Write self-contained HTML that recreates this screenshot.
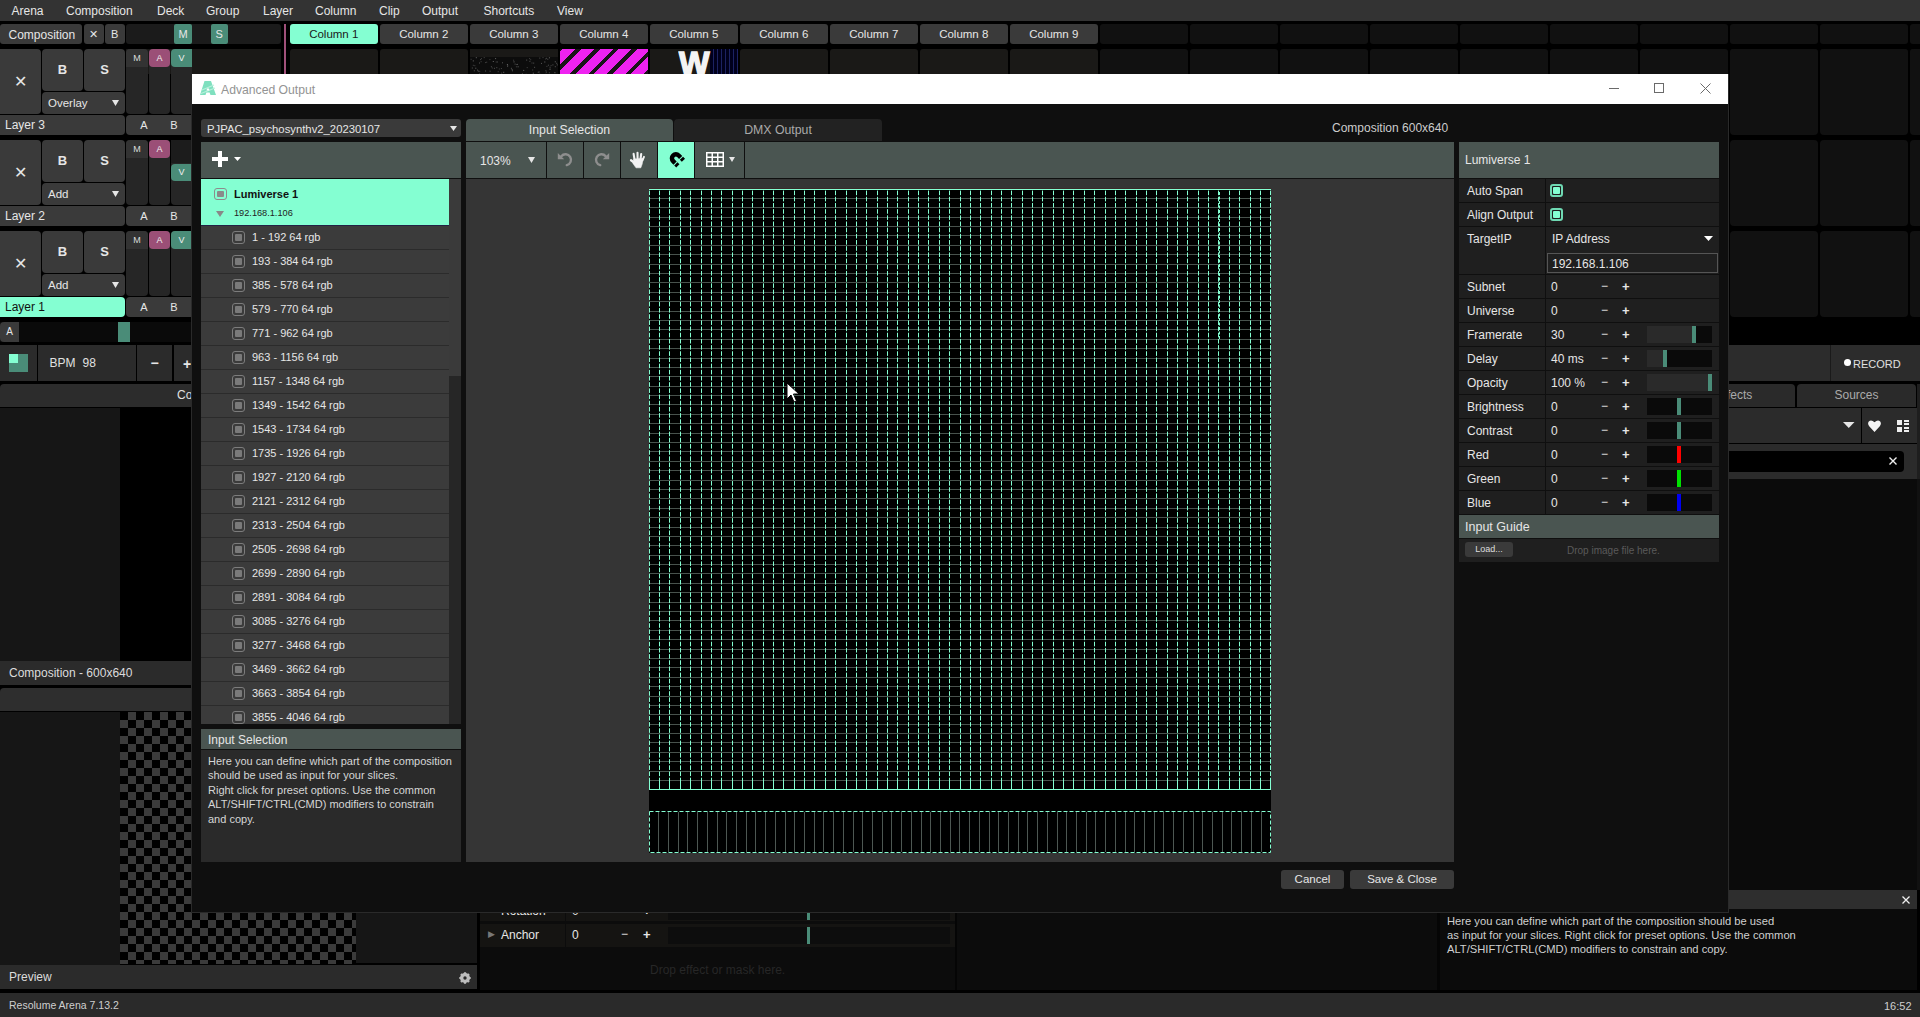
<!DOCTYPE html>
<html><head><meta charset="utf-8"><style>
html,body{margin:0;padding:0;width:1920px;height:1017px;overflow:hidden;background:#000;}
body{position:relative;font-family:"Liberation Sans",sans-serif;}
.a{position:absolute;box-sizing:border-box;}
.t{position:absolute;white-space:nowrap;line-height:1.15;}
.c{text-align:center;white-space:nowrap;}
</style></head><body>
<div class="a" style="left:0px;top:0px;width:1920px;height:1017px;background:#000;"></div>
<div class="a" style="left:0px;top:0px;width:1920px;height:21px;background:#333333;"></div>
<div class="t" style="left:11.5px;top:4.7px;font-size:12px;color:#e6e6e6;">Arena</div>
<div class="t" style="left:66px;top:4.7px;font-size:12px;color:#e6e6e6;">Composition</div>
<div class="t" style="left:157px;top:4.7px;font-size:12px;color:#e6e6e6;">Deck</div>
<div class="t" style="left:206px;top:4.7px;font-size:12px;color:#e6e6e6;">Group</div>
<div class="t" style="left:263px;top:4.7px;font-size:12px;color:#e6e6e6;">Layer</div>
<div class="t" style="left:315px;top:4.7px;font-size:12px;color:#e6e6e6;">Column</div>
<div class="t" style="left:379px;top:4.7px;font-size:12px;color:#e6e6e6;">Clip</div>
<div class="t" style="left:422px;top:4.7px;font-size:12px;color:#e6e6e6;">Output</div>
<div class="t" style="left:483.5px;top:4.7px;font-size:12px;color:#e6e6e6;">Shortcuts</div>
<div class="t" style="left:557px;top:4.7px;font-size:12px;color:#e6e6e6;">View</div>
<div class="a" style="left:0px;top:24px;width:82px;height:20px;background:#3a3a3a;border-radius:3px;"></div>
<div class="t" style="left:8.5px;top:28.7px;font-size:12px;color:#e6e6e6;">Composition</div>
<div class="a" style="left:84px;top:24px;width:19.5px;height:20px;background:#3a3a3a;border-radius:3px;"></div>
<div class="a c" style="left:84px;top:24px;width:19.5px;height:20px;line-height:20px;font-size:11px;color:#e6e6e6;">&#x2715;</div>
<div class="a" style="left:105px;top:24px;width:19.5px;height:20px;background:#3a3a3a;border-radius:3px;"></div>
<div class="a c" style="left:105px;top:24px;width:19.5px;height:20px;line-height:20px;font-size:11px;color:#e6e6e6;">B</div>
<div class="a" style="left:126px;top:24px;width:155px;height:20px;background:#1b1b1b;border-radius:3px;"></div>
<div class="a" style="left:174px;top:24px;width:18px;height:20px;background:#4a8c78;border-radius:2px;"></div>
<div class="a c" style="left:174px;top:24px;width:18px;height:20px;line-height:20px;font-size:11px;color:#e6e6e6;">M</div>
<div class="a" style="left:210.5px;top:24px;width:17.5px;height:20px;background:#4a8c78;border-radius:2px;"></div>
<div class="a c" style="left:210.5px;top:24px;width:17.5px;height:20px;line-height:20px;font-size:11px;color:#e6e6e6;">S</div>
<div class="a" style="left:284px;top:24px;width:2px;height:50px;background:#a0507a;"></div>
<div class="a" style="left:290px;top:24px;width:87.5px;height:20px;background:#84ffd2;border-radius:3px;"></div>
<div class="a c" style="left:290px;top:24px;width:87.5px;height:20px;line-height:20px;font-size:11.5px;color:#1a1a1a;">Column 1</div>
<div class="a" style="left:290px;top:49px;width:87.5px;height:25px;background:#1a1917;border-radius:3px 3px 0 0;"></div>
<div class="a" style="left:380px;top:24px;width:87.5px;height:20px;background:#3a3a3a;border-radius:3px;"></div>
<div class="a c" style="left:380px;top:24px;width:87.5px;height:20px;line-height:20px;font-size:11.5px;color:#e6e6e6;">Column 2</div>
<div class="a" style="left:380px;top:49px;width:87.5px;height:25px;background:#1a1917;border-radius:3px 3px 0 0;"></div>
<div class="a" style="left:470px;top:24px;width:87.5px;height:20px;background:#3a3a3a;border-radius:3px;"></div>
<div class="a c" style="left:470px;top:24px;width:87.5px;height:20px;line-height:20px;font-size:11.5px;color:#e6e6e6;">Column 3</div>
<div class="a" style="left:470px;top:49px;width:87.5px;height:25px;background:#1a1917;border-radius:3px 3px 0 0;"></div>
<div class="a" style="left:560px;top:24px;width:87.5px;height:20px;background:#3a3a3a;border-radius:3px;"></div>
<div class="a c" style="left:560px;top:24px;width:87.5px;height:20px;line-height:20px;font-size:11.5px;color:#e6e6e6;">Column 4</div>
<div class="a" style="left:560px;top:49px;width:87.5px;height:25px;background:#1a1917;border-radius:3px 3px 0 0;"></div>
<div class="a" style="left:650px;top:24px;width:87.5px;height:20px;background:#3a3a3a;border-radius:3px;"></div>
<div class="a c" style="left:650px;top:24px;width:87.5px;height:20px;line-height:20px;font-size:11.5px;color:#e6e6e6;">Column 5</div>
<div class="a" style="left:650px;top:49px;width:87.5px;height:25px;background:#1a1917;border-radius:3px 3px 0 0;"></div>
<div class="a" style="left:740px;top:24px;width:87.5px;height:20px;background:#3a3a3a;border-radius:3px;"></div>
<div class="a c" style="left:740px;top:24px;width:87.5px;height:20px;line-height:20px;font-size:11.5px;color:#e6e6e6;">Column 6</div>
<div class="a" style="left:740px;top:49px;width:87.5px;height:25px;background:#1a1917;border-radius:3px 3px 0 0;"></div>
<div class="a" style="left:830px;top:24px;width:87.5px;height:20px;background:#3a3a3a;border-radius:3px;"></div>
<div class="a c" style="left:830px;top:24px;width:87.5px;height:20px;line-height:20px;font-size:11.5px;color:#e6e6e6;">Column 7</div>
<div class="a" style="left:830px;top:49px;width:87.5px;height:25px;background:#1a1917;border-radius:3px 3px 0 0;"></div>
<div class="a" style="left:920px;top:24px;width:87.5px;height:20px;background:#3a3a3a;border-radius:3px;"></div>
<div class="a c" style="left:920px;top:24px;width:87.5px;height:20px;line-height:20px;font-size:11.5px;color:#e6e6e6;">Column 8</div>
<div class="a" style="left:920px;top:49px;width:87.5px;height:25px;background:#1a1917;border-radius:3px 3px 0 0;"></div>
<div class="a" style="left:1010px;top:24px;width:87.5px;height:20px;background:#3a3a3a;border-radius:3px;"></div>
<div class="a c" style="left:1010px;top:24px;width:87.5px;height:20px;line-height:20px;font-size:11.5px;color:#e6e6e6;">Column 9</div>
<div class="a" style="left:1010px;top:49px;width:87.5px;height:25px;background:#1a1917;border-radius:3px 3px 0 0;"></div>
<div class="a" style="left:1100px;top:24px;width:87.5px;height:20px;background:#111111;border-radius:3px;"></div>
<div class="a" style="left:1100px;top:49px;width:87.5px;height:25px;background:#111111;border-radius:3px 3px 0 0;"></div>
<div class="a" style="left:1190px;top:24px;width:87.5px;height:20px;background:#111111;border-radius:3px;"></div>
<div class="a" style="left:1190px;top:49px;width:87.5px;height:25px;background:#111111;border-radius:3px 3px 0 0;"></div>
<div class="a" style="left:1280px;top:24px;width:87.5px;height:20px;background:#111111;border-radius:3px;"></div>
<div class="a" style="left:1280px;top:49px;width:87.5px;height:25px;background:#111111;border-radius:3px 3px 0 0;"></div>
<div class="a" style="left:1370px;top:24px;width:87.5px;height:20px;background:#111111;border-radius:3px;"></div>
<div class="a" style="left:1370px;top:49px;width:87.5px;height:25px;background:#111111;border-radius:3px 3px 0 0;"></div>
<div class="a" style="left:1460px;top:24px;width:87.5px;height:20px;background:#111111;border-radius:3px;"></div>
<div class="a" style="left:1460px;top:49px;width:87.5px;height:25px;background:#111111;border-radius:3px 3px 0 0;"></div>
<div class="a" style="left:1550px;top:24px;width:87.5px;height:20px;background:#111111;border-radius:3px;"></div>
<div class="a" style="left:1550px;top:49px;width:87.5px;height:25px;background:#111111;border-radius:3px 3px 0 0;"></div>
<div class="a" style="left:1640px;top:24px;width:87.5px;height:20px;background:#111111;border-radius:3px;"></div>
<div class="a" style="left:1640px;top:49px;width:87.5px;height:25px;background:#111111;border-radius:3px 3px 0 0;"></div>
<div class="a" style="left:1730px;top:24px;width:87.5px;height:20px;background:#111111;border-radius:3px;"></div>
<div class="a" style="left:1730px;top:49px;width:87.5px;height:25px;background:#111111;border-radius:3px 3px 0 0;"></div>
<div class="a" style="left:1820px;top:24px;width:87.5px;height:20px;background:#111111;border-radius:3px;"></div>
<div class="a" style="left:1820px;top:49px;width:87.5px;height:25px;background:#111111;border-radius:3px 3px 0 0;"></div>
<div class="a" style="left:1910px;top:24px;width:87.5px;height:20px;background:#111111;border-radius:3px;"></div>
<div class="a" style="left:1910px;top:49px;width:87.5px;height:25px;background:#111111;border-radius:3px 3px 0 0;"></div>
<div class="a" style="left:126px;top:49px;width:155px;height:25px;background:#1a1917;"></div>
<svg class="a" style="left:470px;top:49px" width="88" height="25"><rect width="88" height="25" fill="#1a1917"/><rect y="8" width="88" height="17" fill="#0c0c0c"/><rect x="20.9" y="17.3" width="1" height="1" fill="#555"/><rect x="80.6" y="16.1" width="1" height="1" fill="#444"/><rect x="5.8" y="8.2" width="1" height="1" fill="#666"/><rect x="22.8" y="12.0" width="1" height="1" fill="#666"/><rect x="47.6" y="17.3" width="1" height="1" fill="#666"/><rect x="56.2" y="10.6" width="1" height="1" fill="#555"/><rect x="76.4" y="16.9" width="1" height="1" fill="#444"/><rect x="59.1" y="9.1" width="1" height="1" fill="#444"/><rect x="3.8" y="21.3" width="1" height="1" fill="#555"/><rect x="41.6" y="20.2" width="1" height="1" fill="#666"/><rect x="62.8" y="23.7" width="1" height="1" fill="#666"/><rect x="64.1" y="17.8" width="1" height="1" fill="#555"/><rect x="77.3" y="9.7" width="1" height="1" fill="#555"/><rect x="43.5" y="12.4" width="1" height="1" fill="#666"/><rect x="68.5" y="22.5" width="1" height="1" fill="#666"/><rect x="44.6" y="14.6" width="1" height="1" fill="#555"/><rect x="47.0" y="14.9" width="1" height="1" fill="#555"/><rect x="79.6" y="19.6" width="1" height="1" fill="#444"/><rect x="75.4" y="24.8" width="1" height="1" fill="#555"/><rect x="61.5" y="13.5" width="1" height="1" fill="#444"/><rect x="79.6" y="17.7" width="1" height="1" fill="#555"/><rect x="55.7" y="24.8" width="1" height="1" fill="#555"/><rect x="25.1" y="9.1" width="1" height="1" fill="#666"/><rect x="7.8" y="21.6" width="1" height="1" fill="#666"/><rect x="78.9" y="8.3" width="1" height="1" fill="#666"/><rect x="67.7" y="22.8" width="1" height="1" fill="#444"/><rect x="53.2" y="20.9" width="1" height="1" fill="#666"/><rect x="63.2" y="13.6" width="1" height="1" fill="#555"/><rect x="44.5" y="25.0" width="1" height="1" fill="#555"/><rect x="0.6" y="9.8" width="1" height="1" fill="#444"/><rect x="2.8" y="11.4" width="1" height="1" fill="#666"/><rect x="25.7" y="12.5" width="1" height="1" fill="#444"/><rect x="86.2" y="13.8" width="1" height="1" fill="#555"/><rect x="84.4" y="23.2" width="1" height="1" fill="#666"/><rect x="33.2" y="22.8" width="1" height="1" fill="#666"/><rect x="56.7" y="18.1" width="1" height="1" fill="#444"/><rect x="9.0" y="24.5" width="1" height="1" fill="#444"/><rect x="23.9" y="18.8" width="1" height="1" fill="#555"/><rect x="82.4" y="15.4" width="1" height="1" fill="#555"/><rect x="45.9" y="17.3" width="1" height="1" fill="#444"/><rect x="69.4" y="24.8" width="1" height="1" fill="#555"/><rect x="1.8" y="18.5" width="1" height="1" fill="#555"/><rect x="5.3" y="18.7" width="1" height="1" fill="#666"/><rect x="31.1" y="23.6" width="1" height="1" fill="#444"/><rect x="62.2" y="20.5" width="1" height="1" fill="#444"/><rect x="51.9" y="24.2" width="1" height="1" fill="#444"/><rect x="84.8" y="12.3" width="1" height="1" fill="#666"/><rect x="26.3" y="18.2" width="1" height="1" fill="#555"/><rect x="32.0" y="13.3" width="1" height="1" fill="#555"/><rect x="74.3" y="12.5" width="1" height="1" fill="#666"/><rect x="9.2" y="21.8" width="1" height="1" fill="#444"/><rect x="60.2" y="10.2" width="1" height="1" fill="#444"/><rect x="19.6" y="21.7" width="1" height="1" fill="#555"/><rect x="28.8" y="19.5" width="1" height="1" fill="#444"/><rect x="9.0" y="13.5" width="1" height="1" fill="#555"/><rect x="59.4" y="11.8" width="1" height="1" fill="#555"/><rect x="7.0" y="20.6" width="1" height="1" fill="#555"/><rect x="77.9" y="15.7" width="1" height="1" fill="#555"/><rect x="69.3" y="8.6" width="1" height="1" fill="#555"/><rect x="27.7" y="22.2" width="1" height="1" fill="#444"/><rect x="16.2" y="12.7" width="1" height="1" fill="#444"/><rect x="71.0" y="13.9" width="1" height="1" fill="#555"/><rect x="37.1" y="16.8" width="1" height="1" fill="#555"/><rect x="40.9" y="18.8" width="1" height="1" fill="#555"/><rect x="36.9" y="15.0" width="1" height="1" fill="#666"/><rect x="13.7" y="8.1" width="1" height="1" fill="#444"/><rect x="86.8" y="15.4" width="1" height="1" fill="#555"/><rect x="2.8" y="15.8" width="1" height="1" fill="#444"/><rect x="84.8" y="17.2" width="1" height="1" fill="#555"/><rect x="75.8" y="22.6" width="1" height="1" fill="#555"/><rect x="10.6" y="12.2" width="1" height="1" fill="#444"/><rect x="79.5" y="19.8" width="1" height="1" fill="#555"/><rect x="78.9" y="23.3" width="1" height="1" fill="#444"/><rect x="4.3" y="16.2" width="1" height="1" fill="#444"/><rect x="15.1" y="13.1" width="1" height="1" fill="#444"/><rect x="46.2" y="15.0" width="1" height="1" fill="#444"/><rect x="10.0" y="10.1" width="1" height="1" fill="#444"/><rect x="42.0" y="21.3" width="1" height="1" fill="#555"/><rect x="19.4" y="10.1" width="1" height="1" fill="#444"/><rect x="15.1" y="21.5" width="1" height="1" fill="#555"/><rect x="72.5" y="8.1" width="1" height="1" fill="#444"/><rect x="75.9" y="8.8" width="1" height="1" fill="#555"/><rect x="21.8" y="18.5" width="1" height="1" fill="#444"/><rect x="37.2" y="16.0" width="1" height="1" fill="#444"/><rect x="75.4" y="21.2" width="1" height="1" fill="#444"/><rect x="11.0" y="9.2" width="1" height="1" fill="#444"/><rect x="75.2" y="9.5" width="1" height="1" fill="#444"/><rect x="43.1" y="10.7" width="1" height="1" fill="#444"/><rect x="30.9" y="19.0" width="1" height="1" fill="#444"/><rect x="26.8" y="12.5" width="1" height="1" fill="#555"/></svg>
<div class="a" style="left:560px;top:49px;width:88px;height:25px;background:repeating-linear-gradient(135deg,#1a1418 0 2.1px,#ee22f0 2.1px 11.3px,#1a1418 11.3px 13.1px);"></div>
<div class="a" style="left:650px;top:49px;width:88px;height:25px;background:#1a1917;"></div>
<div class="a" style="left:710px;top:49px;width:28px;height:25px;background:repeating-linear-gradient(90deg,#00001c 0 3px,#1c2262 3px 4px);"></div>
<div class="a" style="left:678px;top:46px;width:36px;height:28px;overflow:hidden;"><div style="position:absolute;left:0;top:0;font:bold 34px/1 'Liberation Sans',sans-serif;color:#f4f4f4;-webkit-text-stroke:1.5px #f4f4f4;transform:scaleX(0.95);transform-origin:0 0;left:1px;">W</div></div>
<div class="a" style="left:1730px;top:49px;width:87.5px;height:86px;background:#111111;border-radius:4px;"></div>
<div class="a" style="left:1820px;top:49px;width:87.5px;height:86px;background:#111111;border-radius:4px;"></div>
<div class="a" style="left:1910px;top:49px;width:87.5px;height:86px;background:#111111;border-radius:4px;"></div>
<div class="a" style="left:1730px;top:140px;width:87.5px;height:86px;background:#111111;border-radius:4px;"></div>
<div class="a" style="left:1820px;top:140px;width:87.5px;height:86px;background:#111111;border-radius:4px;"></div>
<div class="a" style="left:1910px;top:140px;width:87.5px;height:86px;background:#111111;border-radius:4px;"></div>
<div class="a" style="left:1730px;top:231px;width:87.5px;height:86px;background:#111111;border-radius:4px;"></div>
<div class="a" style="left:1820px;top:231px;width:87.5px;height:86px;background:#111111;border-radius:4px;"></div>
<div class="a" style="left:1910px;top:231px;width:87.5px;height:86px;background:#111111;border-radius:4px;"></div>
<div class="a" style="left:0px;top:49px;width:41px;height:65px;background:#3a3a3a;border-radius:0 4px 4px 0;"></div>
<div class="a c" style="left:0px;top:49px;width:41px;height:65px;line-height:65px;font-size:16px;color:#e6e6e6;">&#x2715;</div>
<div class="a" style="left:42px;top:49px;width:41px;height:42px;background:#3a3a3a;border-radius:4px;"></div>
<div class="a c" style="left:42px;top:49px;width:41px;height:42px;line-height:42px;font-size:13px;color:#e6e6e6;font-weight:bold;">B</div>
<div class="a" style="left:84px;top:49px;width:41px;height:42px;background:#3a3a3a;border-radius:4px;"></div>
<div class="a c" style="left:84px;top:49px;width:41px;height:42px;line-height:42px;font-size:13px;color:#e6e6e6;font-weight:bold;">S</div>
<div class="a" style="left:42px;top:92px;width:83px;height:22px;background:#3a3a3a;border-radius:4px;"></div>
<div class="t" style="left:48px;top:96.7px;font-size:11.5px;color:#e6e6e6;">Overlay</div>
<svg class="a" style="left:112px;top:100px" width="7" height="6"><path d="M0 0 L7 0 L3.5 6 Z" fill="#e6e6e6"/></svg>
<div class="a" style="left:126px;top:49px;width:22px;height:65px;background:#262626;border-radius:4px;"></div>
<div class="a" style="left:126px;top:49px;width:22px;height:18px;background:#333333;border-radius:4px 4px 0 0;"></div>
<div class="a c" style="left:126px;top:49px;width:22px;height:18px;line-height:18px;font-size:9px;color:#dcdcdc;">M</div>
<div class="a" style="left:149px;top:49px;width:21px;height:65px;background:#262626;border-radius:4px;"></div>
<div class="a" style="left:149px;top:49px;width:21px;height:18px;background:#9b4f77;border-radius:4px;"></div>
<div class="a c" style="left:149px;top:49px;width:21px;height:18px;line-height:18px;font-size:9px;color:#f0f0f0;">A</div>
<div class="a" style="left:171px;top:49px;width:21px;height:65px;background:#262626;border-radius:4px 0 0 4px;"></div>
<div class="a" style="left:171px;top:49px;width:21px;height:18px;background:#4a8c78;border-radius:4px 0 0 4px;"></div>
<div class="a c" style="left:171px;top:49px;width:21px;height:18px;line-height:18px;font-size:9px;color:#f0f0f0;">V</div>
<div class="a" style="left:0px;top:115px;width:125px;height:20px;background:#3a3a3a;border-radius:0 4px 4px 0;"></div>
<div class="t" style="left:5px;top:118.7px;font-size:12px;color:#e6e6e6;">Layer 3</div>
<div class="a" style="left:126px;top:115px;width:66px;height:20px;background:#3a3a3a;border-radius:4px 0 0 4px;"></div>
<div class="a c" style="left:134px;top:115px;width:20px;height:20px;line-height:20px;font-size:11px;color:#e6e6e6;">A</div>
<div class="a c" style="left:164px;top:115px;width:20px;height:20px;line-height:20px;font-size:11px;color:#e6e6e6;">B</div>
<div class="a" style="left:0px;top:140px;width:41px;height:65px;background:#3a3a3a;border-radius:0 4px 4px 0;"></div>
<div class="a c" style="left:0px;top:140px;width:41px;height:65px;line-height:65px;font-size:16px;color:#e6e6e6;">&#x2715;</div>
<div class="a" style="left:42px;top:140px;width:41px;height:42px;background:#3a3a3a;border-radius:4px;"></div>
<div class="a c" style="left:42px;top:140px;width:41px;height:42px;line-height:42px;font-size:13px;color:#e6e6e6;font-weight:bold;">B</div>
<div class="a" style="left:84px;top:140px;width:41px;height:42px;background:#3a3a3a;border-radius:4px;"></div>
<div class="a c" style="left:84px;top:140px;width:41px;height:42px;line-height:42px;font-size:13px;color:#e6e6e6;font-weight:bold;">S</div>
<div class="a" style="left:42px;top:183px;width:83px;height:22px;background:#3a3a3a;border-radius:4px;"></div>
<div class="t" style="left:48px;top:187.7px;font-size:11.5px;color:#e6e6e6;">Add</div>
<svg class="a" style="left:112px;top:191px" width="7" height="6"><path d="M0 0 L7 0 L3.5 6 Z" fill="#e6e6e6"/></svg>
<div class="a" style="left:126px;top:140px;width:22px;height:65px;background:#262626;border-radius:4px;"></div>
<div class="a" style="left:126px;top:140px;width:22px;height:18px;background:#333333;border-radius:4px 4px 0 0;"></div>
<div class="a c" style="left:126px;top:140px;width:22px;height:18px;line-height:18px;font-size:9px;color:#dcdcdc;">M</div>
<div class="a" style="left:149px;top:140px;width:21px;height:65px;background:#262626;border-radius:4px;"></div>
<div class="a" style="left:149px;top:140px;width:21px;height:18px;background:#9b4f77;border-radius:4px;"></div>
<div class="a c" style="left:149px;top:140px;width:21px;height:18px;line-height:18px;font-size:9px;color:#f0f0f0;">A</div>
<div class="a" style="left:171px;top:140px;width:21px;height:65px;background:#262626;border-radius:4px 0 0 4px;"></div>
<div class="a" style="left:171px;top:140px;width:21px;height:23px;background:#1c1c1c;"></div>
<div class="a" style="left:171px;top:164px;width:21px;height:17px;background:#4a8c78;border-radius:4px 0 0 4px;"></div>
<div class="a c" style="left:171px;top:164px;width:21px;height:17px;line-height:17px;font-size:9px;color:#f0f0f0;">V</div>
<div class="a" style="left:0px;top:206px;width:125px;height:20px;background:#3a3a3a;border-radius:0 4px 4px 0;"></div>
<div class="t" style="left:5px;top:209.7px;font-size:12px;color:#e6e6e6;">Layer 2</div>
<div class="a" style="left:126px;top:206px;width:66px;height:20px;background:#3a3a3a;border-radius:4px 0 0 4px;"></div>
<div class="a c" style="left:134px;top:206px;width:20px;height:20px;line-height:20px;font-size:11px;color:#e6e6e6;">A</div>
<div class="a c" style="left:164px;top:206px;width:20px;height:20px;line-height:20px;font-size:11px;color:#e6e6e6;">B</div>
<div class="a" style="left:0px;top:231px;width:41px;height:65px;background:#3a3a3a;border-radius:0 4px 4px 0;"></div>
<div class="a c" style="left:0px;top:231px;width:41px;height:65px;line-height:65px;font-size:16px;color:#e6e6e6;">&#x2715;</div>
<div class="a" style="left:42px;top:231px;width:41px;height:42px;background:#3a3a3a;border-radius:4px;"></div>
<div class="a c" style="left:42px;top:231px;width:41px;height:42px;line-height:42px;font-size:13px;color:#e6e6e6;font-weight:bold;">B</div>
<div class="a" style="left:84px;top:231px;width:41px;height:42px;background:#3a3a3a;border-radius:4px;"></div>
<div class="a c" style="left:84px;top:231px;width:41px;height:42px;line-height:42px;font-size:13px;color:#e6e6e6;font-weight:bold;">S</div>
<div class="a" style="left:42px;top:274px;width:83px;height:22px;background:#3a3a3a;border-radius:4px;"></div>
<div class="t" style="left:48px;top:278.7px;font-size:11.5px;color:#e6e6e6;">Add</div>
<svg class="a" style="left:112px;top:282px" width="7" height="6"><path d="M0 0 L7 0 L3.5 6 Z" fill="#e6e6e6"/></svg>
<div class="a" style="left:126px;top:231px;width:22px;height:65px;background:#262626;border-radius:4px;"></div>
<div class="a" style="left:126px;top:231px;width:22px;height:18px;background:#333333;border-radius:4px 4px 0 0;"></div>
<div class="a c" style="left:126px;top:231px;width:22px;height:18px;line-height:18px;font-size:9px;color:#dcdcdc;">M</div>
<div class="a" style="left:149px;top:231px;width:21px;height:65px;background:#262626;border-radius:4px;"></div>
<div class="a" style="left:149px;top:231px;width:21px;height:18px;background:#9b4f77;border-radius:4px;"></div>
<div class="a c" style="left:149px;top:231px;width:21px;height:18px;line-height:18px;font-size:9px;color:#f0f0f0;">A</div>
<div class="a" style="left:171px;top:231px;width:21px;height:65px;background:#262626;border-radius:4px 0 0 4px;"></div>
<div class="a" style="left:171px;top:231px;width:21px;height:18px;background:#4a8c78;border-radius:4px 0 0 4px;"></div>
<div class="a c" style="left:171px;top:231px;width:21px;height:18px;line-height:18px;font-size:9px;color:#f0f0f0;">V</div>
<div class="a" style="left:0px;top:297px;width:125px;height:20px;background:#84ffd2;border-radius:0 4px 4px 0;"></div>
<div class="t" style="left:5px;top:300.7px;font-size:12px;color:#111;">Layer 1</div>
<div class="a" style="left:126px;top:297px;width:66px;height:20px;background:#3a3a3a;border-radius:4px 0 0 4px;"></div>
<div class="a c" style="left:134px;top:297px;width:20px;height:20px;line-height:20px;font-size:11px;color:#e6e6e6;">A</div>
<div class="a c" style="left:164px;top:297px;width:20px;height:20px;line-height:20px;font-size:11px;color:#e6e6e6;">B</div>
<div class="a" style="left:0px;top:322px;width:192px;height:20px;background:#0a0a0a;"></div>
<div class="a" style="left:0px;top:322px;width:19px;height:20px;background:#3a3a3a;border-radius:4px 0 0 4px;"></div>
<div class="a c" style="left:0px;top:322px;width:19px;height:20px;line-height:20px;font-size:10px;color:#e6e6e6;">A</div>
<div class="a" style="left:118px;top:322px;width:12px;height:20px;background:#4a8c78;"></div>
<div class="a" style="left:0px;top:345px;width:37px;height:36px;background:#2b2b2b;"></div>
<div class="a" style="left:9px;top:354px;width:19px;height:18px;background:#4a8c78;"></div>
<div class="a" style="left:9px;top:354px;width:9px;height:9px;background:#84ffd2;"></div>
<div class="a" style="left:38px;top:345px;width:98px;height:36px;background:#2b2b2b;"></div>
<div class="t" style="left:49.5px;top:356.7px;font-size:12px;color:#e0e0e0;">BPM</div>
<div class="t" style="left:82.5px;top:356.7px;font-size:12px;color:#e0e0e0;">98</div>
<div class="a" style="left:137px;top:345px;width:35px;height:36px;background:#2b2b2b;"></div>
<div class="a c" style="left:137px;top:345px;width:35px;height:36px;line-height:36px;font-size:14px;color:#e6e6e6;font-weight:bold;">&#x2212;</div>
<div class="a" style="left:174px;top:345px;width:18px;height:36px;background:#2b2b2b;"></div>
<div class="t" style="left:183px;top:355.7px;font-size:14px;color:#e6e6e6;font-weight:bold;">+</div>
<div class="a" style="left:0px;top:384px;width:192px;height:23px;background:#2c2c2c;border-radius:4px 0 0 0;"></div>
<div class="t" style="left:177px;top:388.7px;font-size:12px;color:#e0e0e0;">Co</div>
<div class="a" style="left:0px;top:408px;width:120px;height:253px;background:#161616;"></div>
<div class="a" style="left:0px;top:661px;width:192px;height:24px;background:#2b2b2b;"></div>
<div class="t" style="left:9px;top:666.7px;font-size:12px;color:#dcdcdc;">Composition - 600x640</div>
<div class="a" style="left:0px;top:688px;width:192px;height:23px;background:#2e2e2e;border-radius:4px 0 0 0;"></div>
<div class="a" style="left:0px;top:712px;width:120px;height:253px;background:#161616;"></div>
<div class="a" style="left:120px;top:712px;width:236px;height:252px;background:conic-gradient(#3b3b3b 25%,#000 0 50%,#3b3b3b 0 75%,#000 0);background-size:16px 16px;"></div>
<div class="a" style="left:356px;top:712px;width:121px;height:251px;background:#161616;"></div>
<div class="a" style="left:0px;top:965px;width:477px;height:24px;background:#2b2b2b;"></div>
<div class="t" style="left:9px;top:970.7px;font-size:12px;color:#dcdcdc;">Preview</div>
<svg class="a" style="left:459px;top:971.5px" width="12" height="12" viewBox="0 0 12 12"><circle cx="6" cy="6" r="3.8" fill="none" stroke="#bdbdbd" stroke-width="2.4"/><path d="M6 0.3 V11.7 M0.3 6 H11.7 M2 2 L10 10 M10 2 L2 10" stroke="#bdbdbd" stroke-width="2.2"/><circle cx="6" cy="6" r="1.7" fill="#2b2b2b"/></svg>
<div class="a" style="left:0px;top:993px;width:1920px;height:24px;background:#2a2a2a;"></div>
<div class="t" style="left:9px;top:998.7px;font-size:10.5px;color:#cfcfcf;">Resolume Arena 7.13.2</div>
<div class="t" style="left:1884px;top:999.7px;font-size:11px;color:#cfcfcf;">16:52</div>
<div class="a" style="left:480px;top:900px;width:477px;height:90px;background:#0c0c0c;"></div>
<div class="a" style="left:480px;top:900px;width:85px;height:21px;background:#151412;"></div>
<div class="a" style="left:566px;top:900px;width:391px;height:21px;background:#151412;"></div>
<div class="a" style="left:480px;top:924px;width:85px;height:23px;background:#151412;"></div>
<div class="a" style="left:566px;top:924px;width:389px;height:23px;background:#151412;"></div>
<div class="t" style="left:501px;top:904.7px;font-size:12px;color:#e6e6e6;">Rotation</div>
<div class="t" style="left:572px;top:904.7px;font-size:12px;color:#e6e6e6;">0</div>
<div class="t" style="left:643px;top:903.7px;font-size:13px;color:#e6e6e6;font-weight:bold;">+</div>
<div class="t" style="left:488px;top:928.7px;font-size:9px;color:#777;">&#x25B6;</div>
<div class="t" style="left:501px;top:928.7px;font-size:12px;color:#e6e6e6;">Anchor</div>
<div class="t" style="left:572px;top:928.7px;font-size:12px;color:#e6e6e6;">0</div>
<div class="t" style="left:621px;top:927.7px;font-size:12px;color:#e6e6e6;">&#x2212;</div>
<div class="t" style="left:643px;top:927.7px;font-size:13px;color:#e6e6e6;font-weight:bold;">+</div>
<div class="a" style="left:668px;top:927px;width:282px;height:17px;background:#0d0d0d;"></div>
<div class="a" style="left:807px;top:927px;width:3px;height:17px;background:#4a8c78;"></div>
<div class="a" style="left:668px;top:903px;width:282px;height:17px;background:#0d0d0d;"></div>
<div class="a" style="left:807px;top:903px;width:3px;height:17px;background:#4a8c78;"></div>
<div class="t" style="left:650px;top:963.7px;font-size:12px;color:#272727;">Drop effect or mask here.</div>
<div class="a" style="left:955px;top:900px;width:2px;height:90px;background:#050505;"></div>
<div class="a" style="left:957px;top:900px;width:483px;height:90px;background:#0c0c0c;"></div>
<div class="a" style="left:1437px;top:900px;width:3px;height:90px;background:#050505;"></div>
<div class="a" style="left:1440px;top:909px;width:477px;height:81px;background:#0b0b0b;"></div>
<div class="a" style="left:1728px;top:890px;width:189px;height:19px;background:#2e2e2e;"></div>
<svg class="a" style="left:1902px;top:896px" width="8" height="8"><path d="M0.5 0.5 L7.5 7.5 M7.5 0.5 L0.5 7.5" stroke="#f0f0f0" stroke-width="1.3"/></svg>
<div class="t" style="left:1447px;top:914.7px;font-size:11.2px;color:#d0d0d0;">Here you can define which part of the composition should be used</div>
<div class="t" style="left:1447px;top:929.0px;font-size:11.2px;color:#d0d0d0;">as input for your slices. Right click for preset options. Use the common</div>
<div class="t" style="left:1447px;top:943.3000000000001px;font-size:11.2px;color:#d0d0d0;">ALT/SHIFT/CTRL(CMD) modifiers to constrain and copy.</div>
<div class="a" style="left:1728px;top:345px;width:192px;height:36px;background:#2c2c2c;"></div>
<div class="a" style="left:1830px;top:345px;width:1px;height:36px;background:#1a1a1a;"></div>
<div class="a" style="left:1844px;top:359px;width:7px;height:7px;border-radius:50%;background:#fff;"></div>
<div class="t" style="left:1853px;top:357.7px;font-size:11px;color:#e0e0e0;">RECORD</div>
<div class="a" style="left:1728px;top:384px;width:67px;height:23px;background:#2a2a2a;border-radius:0 4px 0 0;"></div>
<div class="t" style="left:1727px;top:388.7px;font-size:12px;color:#aaaaaa;">fects</div>
<div class="a" style="left:1797px;top:384px;width:119px;height:23px;background:#2a2a2a;border-radius:4px 4px 0 0;"></div>
<div class="a c" style="left:1797px;top:384px;width:119px;height:23px;line-height:23px;font-size:12px;color:#aaaaaa;">Sources</div>
<div class="a" style="left:1728px;top:408px;width:133px;height:35px;background:#2b2b2b;"></div>
<div class="a" style="left:1862px;top:408px;width:55px;height:35px;background:#2b2b2b;"></div>
<svg class="a" style="left:1843px;top:422px" width="11.5" height="6"><path d="M0 0 L11.5 0 L5.75 6 Z" fill="#e6e6e6"/></svg>
<svg class="a" style="left:1868px;top:420px" width="13" height="12" viewBox="0 0 13 12"><path d="M6.5 12 L1.2 6.3 Q-0.8 3.8 0.8 1.5 Q3.2 -1 6.5 2.3 Q9.8 -1 12.2 1.5 Q13.8 3.8 11.8 6.3 Z" fill="#f4f4f4"/></svg>
<svg class="a" style="left:1897px;top:420px" width="12" height="12"><rect x="0" y="0" width="5" height="5" fill="#eee"/><rect x="0" y="7" width="5" height="5" fill="#eee"/><rect x="7" y="0" width="5" height="2" fill="#eee"/><rect x="7" y="3" width="5" height="2" fill="#eee"/><rect x="7" y="7" width="5" height="2" fill="#eee"/><rect x="7" y="10" width="5" height="2" fill="#eee"/></svg>
<div class="a" style="left:1728px;top:444px;width:189px;height:35px;background:#2b2b2b;"></div>
<div class="a" style="left:1728px;top:451px;width:176px;height:21px;background:#000;border-radius:0 4px 4px 0;"></div>
<svg class="a" style="left:1889px;top:457px" width="8" height="8"><path d="M0.5 0.5 L7.5 7.5 M7.5 0.5 L0.5 7.5" stroke="#f0f0f0" stroke-width="1.4"/></svg>
<div class="a" style="left:1728px;top:479px;width:189px;height:411px;background:#0b0b0b;"></div>
<div class="a" style="left:1917px;top:384px;width:3px;height:95px;background:#1e1e1e;"></div>
<div class="a" style="left:1917px;top:479px;width:3px;height:411px;background:#111111;"></div>
<div class="a" style="left:191px;top:74px;width:1538px;height:839px;background:#2a2a2a;"></div>
<div class="a" style="left:192px;top:74px;width:1536px;height:838px;background:#0f0f0f;"></div>
<div class="a" style="left:192px;top:74px;width:1536px;height:30px;background:#ffffff;"></div>
<svg class="a" style="left:200px;top:81px" width="16" height="14" viewBox="0 0 16 14"><path d="M4.5 0 L11 0 L16 14 L10.5 14 L9.6 11.5 L6.4 11.5 L5.5 14 L0 14 Z" fill="#7fe0bf"/><path d="M2 9 L14 4 M1 12.5 L15 7" stroke="#b8f0dc" stroke-width="1.2"/><path d="M7 7.5 L9 7.5 L9.4 9.5 L6.6 9.5 Z" fill="#fff"/></svg>
<div class="t" style="left:221px;top:82.7px;font-size:12.2px;color:#939393;">Advanced Output</div>
<div class="a" style="left:1609px;top:88px;width:10px;height:1px;background:#6a6a6a;"></div>
<div class="a" style="left:1654px;top:83px;width:10px;height:10px;border:1px solid #6a6a6a;"></div>
<svg class="a" style="left:1700px;top:83px" width="11" height="11"><path d="M0.5 0.5 L10.5 10.5 M10.5 0.5 L0.5 10.5" stroke="#6a6a6a" stroke-width="1"/></svg>
<div class="a" style="left:201px;top:119px;width:260px;height:18px;background:#3a3a3a;border-radius:3px;"></div>
<div class="t" style="left:207px;top:122.7px;font-size:11.3px;color:#e6e6e6;">PJPAC_psychosynthv2_20230107</div>
<svg class="a" style="left:450px;top:126px" width="7" height="5"><path d="M0 0 L7 0 L3.5 5 Z" fill="#e6e6e6"/></svg>
<div class="a" style="left:201px;top:142px;width:260px;height:36px;background:#4a5551;"></div>
<svg class="a" style="left:212px;top:151px" width="16" height="16"><rect x="6" y="0" width="4" height="16" fill="#fff"/><rect x="0" y="6" width="16" height="4" fill="#fff"/></svg>
<svg class="a" style="left:234px;top:157px" width="7" height="4"><path d="M0 0 L7 0 L3.5 4 Z" fill="#fff"/></svg>
<div class="a" style="left:201px;top:179px;width:248px;height:46px;background:#84ffd2;"></div>
<div class="a" style="left:214px;top:188px;width:13px;height:12px;border:1.5px solid #8c8c8c;border-radius:3px;"><div style="position:absolute;left:1.5px;top:1.5px;width:7px;height:6px;background:#8a8a8a;border-radius:1px;"></div></div>
<div class="t" style="left:234px;top:187.7px;font-size:11px;color:#111;font-weight:bold;">Lumiverse 1</div>
<div class="t" style="left:234px;top:207.7px;font-size:9.2px;color:#222;">192.168.1.106</div>
<svg class="a" style="left:216px;top:211px" width="8" height="6"><path d="M0 0 L8 0 L4 6 Z" fill="#888"/></svg>
<div class="a" style="left:201px;top:225px;width:248px;height:1px;background:#222244;"></div>
<div class="a" style="left:201px;top:226px;width:248px;height:23px;background:#3b3b3b;"></div>
<div class="a" style="left:201px;top:249px;width:248px;height:1px;background:#2b2b2b;"></div>
<div class="a" style="left:232px;top:231px;width:13px;height:13px;border:1.5px solid #7c7c7c;border-radius:3px;"><div style="position:absolute;left:1.5px;top:1.5px;width:7px;height:7px;background:#7a7a7a;border-radius:1px;"></div></div>
<div class="t" style="left:252px;top:230.7px;font-size:11px;color:#e6e6e6;">1 - 192 64 rgb</div>
<div class="a" style="left:201px;top:250px;width:248px;height:23px;background:#3b3b3b;"></div>
<div class="a" style="left:201px;top:273px;width:248px;height:1px;background:#2b2b2b;"></div>
<div class="a" style="left:232px;top:255px;width:13px;height:13px;border:1.5px solid #7c7c7c;border-radius:3px;"><div style="position:absolute;left:1.5px;top:1.5px;width:7px;height:7px;background:#7a7a7a;border-radius:1px;"></div></div>
<div class="t" style="left:252px;top:254.7px;font-size:11px;color:#e6e6e6;">193 - 384 64 rgb</div>
<div class="a" style="left:201px;top:274px;width:248px;height:23px;background:#3b3b3b;"></div>
<div class="a" style="left:201px;top:297px;width:248px;height:1px;background:#2b2b2b;"></div>
<div class="a" style="left:232px;top:279px;width:13px;height:13px;border:1.5px solid #7c7c7c;border-radius:3px;"><div style="position:absolute;left:1.5px;top:1.5px;width:7px;height:7px;background:#7a7a7a;border-radius:1px;"></div></div>
<div class="t" style="left:252px;top:278.7px;font-size:11px;color:#e6e6e6;">385 - 578 64 rgb</div>
<div class="a" style="left:201px;top:298px;width:248px;height:23px;background:#3b3b3b;"></div>
<div class="a" style="left:201px;top:321px;width:248px;height:1px;background:#2b2b2b;"></div>
<div class="a" style="left:232px;top:303px;width:13px;height:13px;border:1.5px solid #7c7c7c;border-radius:3px;"><div style="position:absolute;left:1.5px;top:1.5px;width:7px;height:7px;background:#7a7a7a;border-radius:1px;"></div></div>
<div class="t" style="left:252px;top:302.7px;font-size:11px;color:#e6e6e6;">579 - 770 64 rgb</div>
<div class="a" style="left:201px;top:322px;width:248px;height:23px;background:#3b3b3b;"></div>
<div class="a" style="left:201px;top:345px;width:248px;height:1px;background:#2b2b2b;"></div>
<div class="a" style="left:232px;top:327px;width:13px;height:13px;border:1.5px solid #7c7c7c;border-radius:3px;"><div style="position:absolute;left:1.5px;top:1.5px;width:7px;height:7px;background:#7a7a7a;border-radius:1px;"></div></div>
<div class="t" style="left:252px;top:326.7px;font-size:11px;color:#e6e6e6;">771 - 962 64 rgb</div>
<div class="a" style="left:201px;top:346px;width:248px;height:23px;background:#3b3b3b;"></div>
<div class="a" style="left:201px;top:369px;width:248px;height:1px;background:#2b2b2b;"></div>
<div class="a" style="left:232px;top:351px;width:13px;height:13px;border:1.5px solid #7c7c7c;border-radius:3px;"><div style="position:absolute;left:1.5px;top:1.5px;width:7px;height:7px;background:#7a7a7a;border-radius:1px;"></div></div>
<div class="t" style="left:252px;top:350.7px;font-size:11px;color:#e6e6e6;">963 - 1156 64 rgb</div>
<div class="a" style="left:201px;top:370px;width:248px;height:23px;background:#3b3b3b;"></div>
<div class="a" style="left:201px;top:393px;width:248px;height:1px;background:#2b2b2b;"></div>
<div class="a" style="left:232px;top:375px;width:13px;height:13px;border:1.5px solid #7c7c7c;border-radius:3px;"><div style="position:absolute;left:1.5px;top:1.5px;width:7px;height:7px;background:#7a7a7a;border-radius:1px;"></div></div>
<div class="t" style="left:252px;top:374.7px;font-size:11px;color:#e6e6e6;">1157 - 1348 64 rgb</div>
<div class="a" style="left:201px;top:394px;width:248px;height:23px;background:#3b3b3b;"></div>
<div class="a" style="left:201px;top:417px;width:248px;height:1px;background:#2b2b2b;"></div>
<div class="a" style="left:232px;top:399px;width:13px;height:13px;border:1.5px solid #7c7c7c;border-radius:3px;"><div style="position:absolute;left:1.5px;top:1.5px;width:7px;height:7px;background:#7a7a7a;border-radius:1px;"></div></div>
<div class="t" style="left:252px;top:398.7px;font-size:11px;color:#e6e6e6;">1349 - 1542 64 rgb</div>
<div class="a" style="left:201px;top:418px;width:248px;height:23px;background:#3b3b3b;"></div>
<div class="a" style="left:201px;top:441px;width:248px;height:1px;background:#2b2b2b;"></div>
<div class="a" style="left:232px;top:423px;width:13px;height:13px;border:1.5px solid #7c7c7c;border-radius:3px;"><div style="position:absolute;left:1.5px;top:1.5px;width:7px;height:7px;background:#7a7a7a;border-radius:1px;"></div></div>
<div class="t" style="left:252px;top:422.7px;font-size:11px;color:#e6e6e6;">1543 - 1734 64 rgb</div>
<div class="a" style="left:201px;top:442px;width:248px;height:23px;background:#3b3b3b;"></div>
<div class="a" style="left:201px;top:465px;width:248px;height:1px;background:#2b2b2b;"></div>
<div class="a" style="left:232px;top:447px;width:13px;height:13px;border:1.5px solid #7c7c7c;border-radius:3px;"><div style="position:absolute;left:1.5px;top:1.5px;width:7px;height:7px;background:#7a7a7a;border-radius:1px;"></div></div>
<div class="t" style="left:252px;top:446.7px;font-size:11px;color:#e6e6e6;">1735 - 1926 64 rgb</div>
<div class="a" style="left:201px;top:466px;width:248px;height:23px;background:#3b3b3b;"></div>
<div class="a" style="left:201px;top:489px;width:248px;height:1px;background:#2b2b2b;"></div>
<div class="a" style="left:232px;top:471px;width:13px;height:13px;border:1.5px solid #7c7c7c;border-radius:3px;"><div style="position:absolute;left:1.5px;top:1.5px;width:7px;height:7px;background:#7a7a7a;border-radius:1px;"></div></div>
<div class="t" style="left:252px;top:470.7px;font-size:11px;color:#e6e6e6;">1927 - 2120 64 rgb</div>
<div class="a" style="left:201px;top:490px;width:248px;height:23px;background:#3b3b3b;"></div>
<div class="a" style="left:201px;top:513px;width:248px;height:1px;background:#2b2b2b;"></div>
<div class="a" style="left:232px;top:495px;width:13px;height:13px;border:1.5px solid #7c7c7c;border-radius:3px;"><div style="position:absolute;left:1.5px;top:1.5px;width:7px;height:7px;background:#7a7a7a;border-radius:1px;"></div></div>
<div class="t" style="left:252px;top:494.7px;font-size:11px;color:#e6e6e6;">2121 - 2312 64 rgb</div>
<div class="a" style="left:201px;top:514px;width:248px;height:23px;background:#3b3b3b;"></div>
<div class="a" style="left:201px;top:537px;width:248px;height:1px;background:#2b2b2b;"></div>
<div class="a" style="left:232px;top:519px;width:13px;height:13px;border:1.5px solid #7c7c7c;border-radius:3px;"><div style="position:absolute;left:1.5px;top:1.5px;width:7px;height:7px;background:#7a7a7a;border-radius:1px;"></div></div>
<div class="t" style="left:252px;top:518.7px;font-size:11px;color:#e6e6e6;">2313 - 2504 64 rgb</div>
<div class="a" style="left:201px;top:538px;width:248px;height:23px;background:#3b3b3b;"></div>
<div class="a" style="left:201px;top:561px;width:248px;height:1px;background:#2b2b2b;"></div>
<div class="a" style="left:232px;top:543px;width:13px;height:13px;border:1.5px solid #7c7c7c;border-radius:3px;"><div style="position:absolute;left:1.5px;top:1.5px;width:7px;height:7px;background:#7a7a7a;border-radius:1px;"></div></div>
<div class="t" style="left:252px;top:542.7px;font-size:11px;color:#e6e6e6;">2505 - 2698 64 rgb</div>
<div class="a" style="left:201px;top:562px;width:248px;height:23px;background:#3b3b3b;"></div>
<div class="a" style="left:201px;top:585px;width:248px;height:1px;background:#2b2b2b;"></div>
<div class="a" style="left:232px;top:567px;width:13px;height:13px;border:1.5px solid #7c7c7c;border-radius:3px;"><div style="position:absolute;left:1.5px;top:1.5px;width:7px;height:7px;background:#7a7a7a;border-radius:1px;"></div></div>
<div class="t" style="left:252px;top:566.7px;font-size:11px;color:#e6e6e6;">2699 - 2890 64 rgb</div>
<div class="a" style="left:201px;top:586px;width:248px;height:23px;background:#3b3b3b;"></div>
<div class="a" style="left:201px;top:609px;width:248px;height:1px;background:#2b2b2b;"></div>
<div class="a" style="left:232px;top:591px;width:13px;height:13px;border:1.5px solid #7c7c7c;border-radius:3px;"><div style="position:absolute;left:1.5px;top:1.5px;width:7px;height:7px;background:#7a7a7a;border-radius:1px;"></div></div>
<div class="t" style="left:252px;top:590.7px;font-size:11px;color:#e6e6e6;">2891 - 3084 64 rgb</div>
<div class="a" style="left:201px;top:610px;width:248px;height:23px;background:#3b3b3b;"></div>
<div class="a" style="left:201px;top:633px;width:248px;height:1px;background:#2b2b2b;"></div>
<div class="a" style="left:232px;top:615px;width:13px;height:13px;border:1.5px solid #7c7c7c;border-radius:3px;"><div style="position:absolute;left:1.5px;top:1.5px;width:7px;height:7px;background:#7a7a7a;border-radius:1px;"></div></div>
<div class="t" style="left:252px;top:614.7px;font-size:11px;color:#e6e6e6;">3085 - 3276 64 rgb</div>
<div class="a" style="left:201px;top:634px;width:248px;height:23px;background:#3b3b3b;"></div>
<div class="a" style="left:201px;top:657px;width:248px;height:1px;background:#2b2b2b;"></div>
<div class="a" style="left:232px;top:639px;width:13px;height:13px;border:1.5px solid #7c7c7c;border-radius:3px;"><div style="position:absolute;left:1.5px;top:1.5px;width:7px;height:7px;background:#7a7a7a;border-radius:1px;"></div></div>
<div class="t" style="left:252px;top:638.7px;font-size:11px;color:#e6e6e6;">3277 - 3468 64 rgb</div>
<div class="a" style="left:201px;top:658px;width:248px;height:23px;background:#3b3b3b;"></div>
<div class="a" style="left:201px;top:681px;width:248px;height:1px;background:#2b2b2b;"></div>
<div class="a" style="left:232px;top:663px;width:13px;height:13px;border:1.5px solid #7c7c7c;border-radius:3px;"><div style="position:absolute;left:1.5px;top:1.5px;width:7px;height:7px;background:#7a7a7a;border-radius:1px;"></div></div>
<div class="t" style="left:252px;top:662.7px;font-size:11px;color:#e6e6e6;">3469 - 3662 64 rgb</div>
<div class="a" style="left:201px;top:682px;width:248px;height:23px;background:#3b3b3b;"></div>
<div class="a" style="left:201px;top:705px;width:248px;height:1px;background:#2b2b2b;"></div>
<div class="a" style="left:232px;top:687px;width:13px;height:13px;border:1.5px solid #7c7c7c;border-radius:3px;"><div style="position:absolute;left:1.5px;top:1.5px;width:7px;height:7px;background:#7a7a7a;border-radius:1px;"></div></div>
<div class="t" style="left:252px;top:686.7px;font-size:11px;color:#e6e6e6;">3663 - 3854 64 rgb</div>
<div class="a" style="left:201px;top:706px;width:248px;height:18px;background:#3b3b3b;"></div>
<div class="a" style="left:232px;top:711px;width:13px;height:13px;border:1.5px solid #7c7c7c;border-radius:3px;"><div style="position:absolute;left:1.5px;top:1.5px;width:7px;height:7px;background:#7a7a7a;border-radius:1px;"></div></div>
<div class="t" style="left:252px;top:710.7px;font-size:11px;color:#e6e6e6;">3855 - 4046 64 rgb</div>
<div class="a" style="left:449px;top:179px;width:12px;height:545px;background:#262626;"></div>
<div class="a" style="left:449px;top:179px;width:12px;height:197px;background:#3a3a3a;"></div>
<div class="a" style="left:201px;top:729px;width:260px;height:20px;background:#4a5551;"></div>
<div class="t" style="left:208px;top:733.7px;font-size:12px;color:#e6e6e6;">Input Selection</div>
<div class="a" style="left:201px;top:750px;width:260px;height:112px;background:#2a2a2a;"></div>
<div class="t" style="left:208px;top:754.7px;font-size:11px;color:#d6d6d6;">Here you can define which part of the composition</div>
<div class="t" style="left:208px;top:769.2px;font-size:11px;color:#d6d6d6;">should be used as input for your slices.</div>
<div class="t" style="left:208px;top:783.7px;font-size:11px;color:#d6d6d6;">Right click for preset options. Use the common</div>
<div class="t" style="left:208px;top:798.2px;font-size:11px;color:#d6d6d6;">ALT/SHIFT/CTRL(CMD) modifiers to constrain</div>
<div class="t" style="left:208px;top:812.7px;font-size:11px;color:#d6d6d6;">and copy.</div>
<div class="a" style="left:466px;top:119px;width:207px;height:22px;background:#4a5551;border-radius:4px 4px 0 0;"></div>
<div class="a c" style="left:466px;top:119px;width:207px;height:22px;line-height:22px;font-size:12.3px;color:#e6e6e6;">Input Selection</div>
<div class="a" style="left:674px;top:119px;width:208px;height:22px;background:#222222;border-radius:4px 4px 0 0;"></div>
<div class="a c" style="left:674px;top:119px;width:208px;height:22px;line-height:22px;font-size:12.3px;color:#aaaaaa;">DMX Output</div>
<div class="t" style="left:1332px;top:121.7px;font-size:12px;color:#cccccc;">Composition 600x640</div>
<div class="a" style="left:466px;top:142px;width:988px;height:36px;background:#4a5551;"></div>
<div class="a" style="left:546px;top:142px;width:1px;height:36px;background:#0f0f0f;"></div>
<div class="a" style="left:583px;top:142px;width:1px;height:36px;background:#0f0f0f;"></div>
<div class="a" style="left:620px;top:142px;width:1px;height:36px;background:#0f0f0f;"></div>
<div class="a" style="left:657px;top:142px;width:1px;height:36px;background:#0f0f0f;"></div>
<div class="a" style="left:694px;top:142px;width:1px;height:36px;background:#0f0f0f;"></div>
<div class="a" style="left:744px;top:142px;width:1px;height:36px;background:#0f0f0f;"></div>
<div class="a" style="left:658px;top:142px;width:36px;height:36px;background:#84ffd2;"></div>
<div class="t" style="left:480px;top:154.7px;font-size:12px;color:#e6e6e6;">103%</div>
<svg class="a" style="left:528px;top:157px" width="7" height="6"><path d="M0 0 L7 0 L3.5 6 Z" fill="#e6e6e6"/></svg>
<svg class="a" style="left:547px;top:142px" width="36" height="36"><path d="M14.3 14.2 A5.5 5.5 0 1 1 19.8 23.1" fill="none" stroke="#8e8e8e" stroke-width="2.4" stroke-linecap="round"/><path d="M10.8 10.9 L10.8 17.3 L17.2 17.3 Z" fill="#8e8e8e"/></svg>
<svg class="a" style="left:584px;top:142px" width="36" height="36"><g transform="translate(36 0) scale(-1 1)"><path d="M14.3 14.2 A5.5 5.5 0 1 1 19.8 23.1" fill="none" stroke="#8e8e8e" stroke-width="2.4" stroke-linecap="round"/><path d="M10.8 10.9 L10.8 17.3 L17.2 17.3 Z" fill="#8e8e8e"/></g></svg>
<svg class="a" style="left:629px;top:151px" width="17" height="18" viewBox="0 0 17 18"><g stroke="#f2f2f2" stroke-linecap="round" fill="#f2f2f2"><path d="M5 8 L14 7.5 L13.2 13 L11.8 16.8 L7 16.8 L4 12.5 Z" stroke-width="0.6"/><path d="M5.6 9 L4.6 2.8" stroke-width="2.1"/><path d="M8.6 9 L8.5 1.8" stroke-width="2.1"/><path d="M11.4 9 L12.2 3" stroke-width="2.1"/><path d="M13.4 9.5 L15 5.8" stroke-width="1.9"/><path d="M6.5 12.5 L2 9.2" stroke-width="2.3"/></g></svg>
<svg class="a" style="left:658px;top:142px" width="36" height="36" viewBox="0 0 36 36"><g transform="translate(17.9 16.3) rotate(-45)"><path d="M-6.2 0 A6.2 6.2 0 0 1 6.2 0 L6.2 2.8 L1.7 2.8 L1.7 0 A1.7 1.7 0 0 0 -1.7 0 L-1.7 2.8 L-6.2 2.8 Z" fill="#000"/><rect x="-6.2" y="3.9" width="4.5" height="2.8" fill="#000"/><rect x="1.7" y="3.9" width="4.5" height="2.8" fill="#000"/></g></svg>
<svg class="a" style="left:706px;top:152px" width="18" height="15"><rect x="0.75" y="0.75" width="16.5" height="13.5" fill="none" stroke="#fff" stroke-width="1.5"/><path d="M6.25 0 V15 M11.75 0 V15 M0 5.25 H18 M0 9.75 H18" stroke="#fff" stroke-width="1.5"/></svg>
<svg class="a" style="left:729px;top:157px" width="6" height="5"><path d="M0 0 L6 0 L3.0 5 Z" fill="#e6e6e6"/></svg>
<div class="a" style="left:466px;top:179px;width:988px;height:683px;background:#353535;"></div>
<div class="a" style="left:649px;top:189px;width:622px;height:664px;background:#000;"></div>
<svg class="a" style="left:0;top:0" width="1920" height="1017"><line x1="649" y1="198.5" x2="1271" y2="198.5" stroke="#48524d" stroke-width="1"/><line x1="649" y1="207.5" x2="1271" y2="207.5" stroke="#48524d" stroke-width="1"/><line x1="649" y1="217.5" x2="1271" y2="217.5" stroke="#48524d" stroke-width="1"/><line x1="649" y1="226.5" x2="1271" y2="226.5" stroke="#48524d" stroke-width="1"/><line x1="649" y1="235.5" x2="1271" y2="235.5" stroke="#48524d" stroke-width="1"/><line x1="649" y1="245.5" x2="1271" y2="245.5" stroke="#48524d" stroke-width="1"/><line x1="649" y1="254.5" x2="1271" y2="254.5" stroke="#48524d" stroke-width="1"/><line x1="649" y1="264.5" x2="1271" y2="264.5" stroke="#48524d" stroke-width="1"/><line x1="649" y1="273.5" x2="1271" y2="273.5" stroke="#48524d" stroke-width="1"/><line x1="649" y1="282.5" x2="1271" y2="282.5" stroke="#48524d" stroke-width="1"/><line x1="649" y1="292.5" x2="1271" y2="292.5" stroke="#48524d" stroke-width="1"/><line x1="649" y1="301.5" x2="1271" y2="301.5" stroke="#48524d" stroke-width="1"/><line x1="649" y1="311.5" x2="1271" y2="311.5" stroke="#48524d" stroke-width="1"/><line x1="649" y1="320.5" x2="1271" y2="320.5" stroke="#48524d" stroke-width="1"/><line x1="649" y1="329.5" x2="1271" y2="329.5" stroke="#48524d" stroke-width="1"/><line x1="649" y1="339.5" x2="1271" y2="339.5" stroke="#48524d" stroke-width="1"/><line x1="649" y1="348.5" x2="1271" y2="348.5" stroke="#48524d" stroke-width="1"/><line x1="649" y1="358.5" x2="1271" y2="358.5" stroke="#48524d" stroke-width="1"/><line x1="649" y1="367.5" x2="1271" y2="367.5" stroke="#48524d" stroke-width="1"/><line x1="649" y1="376.5" x2="1271" y2="376.5" stroke="#48524d" stroke-width="1"/><line x1="649" y1="386.5" x2="1271" y2="386.5" stroke="#48524d" stroke-width="1"/><line x1="649" y1="395.5" x2="1271" y2="395.5" stroke="#48524d" stroke-width="1"/><line x1="649" y1="404.5" x2="1271" y2="404.5" stroke="#48524d" stroke-width="1"/><line x1="649" y1="414.5" x2="1271" y2="414.5" stroke="#48524d" stroke-width="1"/><line x1="649" y1="423.5" x2="1271" y2="423.5" stroke="#48524d" stroke-width="1"/><line x1="649" y1="433.5" x2="1271" y2="433.5" stroke="#48524d" stroke-width="1"/><line x1="649" y1="442.5" x2="1271" y2="442.5" stroke="#48524d" stroke-width="1"/><line x1="649" y1="451.5" x2="1271" y2="451.5" stroke="#48524d" stroke-width="1"/><line x1="649" y1="461.5" x2="1271" y2="461.5" stroke="#48524d" stroke-width="1"/><line x1="649" y1="470.5" x2="1271" y2="470.5" stroke="#48524d" stroke-width="1"/><line x1="649" y1="480.5" x2="1271" y2="480.5" stroke="#48524d" stroke-width="1"/><line x1="649" y1="489.5" x2="1271" y2="489.5" stroke="#48524d" stroke-width="1"/><line x1="649" y1="498.5" x2="1271" y2="498.5" stroke="#48524d" stroke-width="1"/><line x1="649" y1="508.5" x2="1271" y2="508.5" stroke="#48524d" stroke-width="1"/><line x1="649" y1="517.5" x2="1271" y2="517.5" stroke="#48524d" stroke-width="1"/><line x1="649" y1="527.5" x2="1271" y2="527.5" stroke="#48524d" stroke-width="1"/><line x1="649" y1="536.5" x2="1271" y2="536.5" stroke="#48524d" stroke-width="1"/><line x1="649" y1="545.5" x2="1271" y2="545.5" stroke="#48524d" stroke-width="1"/><line x1="649" y1="555.5" x2="1271" y2="555.5" stroke="#48524d" stroke-width="1"/><line x1="649" y1="564.5" x2="1271" y2="564.5" stroke="#48524d" stroke-width="1"/><line x1="649" y1="573.5" x2="1271" y2="573.5" stroke="#48524d" stroke-width="1"/><line x1="649" y1="583.5" x2="1271" y2="583.5" stroke="#48524d" stroke-width="1"/><line x1="649" y1="592.5" x2="1271" y2="592.5" stroke="#48524d" stroke-width="1"/><line x1="649" y1="602.5" x2="1271" y2="602.5" stroke="#48524d" stroke-width="1"/><line x1="649" y1="611.5" x2="1271" y2="611.5" stroke="#48524d" stroke-width="1"/><line x1="649" y1="620.5" x2="1271" y2="620.5" stroke="#48524d" stroke-width="1"/><line x1="649" y1="630.5" x2="1271" y2="630.5" stroke="#48524d" stroke-width="1"/><line x1="649" y1="639.5" x2="1271" y2="639.5" stroke="#48524d" stroke-width="1"/><line x1="649" y1="649.5" x2="1271" y2="649.5" stroke="#48524d" stroke-width="1"/><line x1="649" y1="658.5" x2="1271" y2="658.5" stroke="#48524d" stroke-width="1"/><line x1="649" y1="667.5" x2="1271" y2="667.5" stroke="#48524d" stroke-width="1"/><line x1="649" y1="677.5" x2="1271" y2="677.5" stroke="#48524d" stroke-width="1"/><line x1="649" y1="686.5" x2="1271" y2="686.5" stroke="#48524d" stroke-width="1"/><line x1="649" y1="696.5" x2="1271" y2="696.5" stroke="#48524d" stroke-width="1"/><line x1="649" y1="705.5" x2="1271" y2="705.5" stroke="#48524d" stroke-width="1"/><line x1="649" y1="714.5" x2="1271" y2="714.5" stroke="#48524d" stroke-width="1"/><line x1="649" y1="724.5" x2="1271" y2="724.5" stroke="#48524d" stroke-width="1"/><line x1="649" y1="733.5" x2="1271" y2="733.5" stroke="#48524d" stroke-width="1"/><line x1="649" y1="742.5" x2="1271" y2="742.5" stroke="#48524d" stroke-width="1"/><line x1="649" y1="752.5" x2="1271" y2="752.5" stroke="#48524d" stroke-width="1"/><line x1="649" y1="761.5" x2="1271" y2="761.5" stroke="#48524d" stroke-width="1"/><line x1="649" y1="771.5" x2="1271" y2="771.5" stroke="#48524d" stroke-width="1"/><line x1="649" y1="780.5" x2="1271" y2="780.5" stroke="#48524d" stroke-width="1"/><line x1="649.5" y1="189" x2="649.5" y2="780" stroke="#84ffd2" stroke-width="1" stroke-dasharray="4.6 1.58" stroke-dashoffset="4.58"/><line x1="649.5" y1="780" x2="649.5" y2="789" stroke="#84ffd2" stroke-width="1"/><line x1="659.5" y1="189" x2="659.5" y2="780" stroke="#84ffd2" stroke-width="1" stroke-dasharray="4.6 1.58" stroke-dashoffset="4.58"/><line x1="659.5" y1="780" x2="659.5" y2="789" stroke="#84ffd2" stroke-width="1"/><line x1="669.5" y1="189" x2="669.5" y2="780" stroke="#84ffd2" stroke-width="1" stroke-dasharray="4.6 1.58" stroke-dashoffset="4.58"/><line x1="669.5" y1="780" x2="669.5" y2="789" stroke="#84ffd2" stroke-width="1"/><line x1="680.5" y1="189" x2="680.5" y2="780" stroke="#84ffd2" stroke-width="1" stroke-dasharray="4.6 1.58" stroke-dashoffset="4.58"/><line x1="680.5" y1="780" x2="680.5" y2="789" stroke="#84ffd2" stroke-width="1"/><line x1="690.5" y1="189" x2="690.5" y2="780" stroke="#84ffd2" stroke-width="1" stroke-dasharray="4.6 1.58" stroke-dashoffset="4.58"/><line x1="690.5" y1="780" x2="690.5" y2="789" stroke="#84ffd2" stroke-width="1"/><line x1="701.5" y1="189" x2="701.5" y2="780" stroke="#84ffd2" stroke-width="1" stroke-dasharray="4.6 1.58" stroke-dashoffset="4.58"/><line x1="701.5" y1="780" x2="701.5" y2="789" stroke="#84ffd2" stroke-width="1"/><line x1="711.5" y1="189" x2="711.5" y2="780" stroke="#84ffd2" stroke-width="1" stroke-dasharray="4.6 1.58" stroke-dashoffset="4.58"/><line x1="711.5" y1="780" x2="711.5" y2="789" stroke="#84ffd2" stroke-width="1"/><line x1="721.5" y1="189" x2="721.5" y2="780" stroke="#84ffd2" stroke-width="1" stroke-dasharray="4.6 1.58" stroke-dashoffset="4.58"/><line x1="721.5" y1="780" x2="721.5" y2="789" stroke="#84ffd2" stroke-width="1"/><line x1="732.5" y1="189" x2="732.5" y2="780" stroke="#84ffd2" stroke-width="1" stroke-dasharray="4.6 1.58" stroke-dashoffset="4.58"/><line x1="732.5" y1="780" x2="732.5" y2="789" stroke="#84ffd2" stroke-width="1"/><line x1="742.5" y1="189" x2="742.5" y2="780" stroke="#84ffd2" stroke-width="1" stroke-dasharray="4.6 1.58" stroke-dashoffset="4.58"/><line x1="742.5" y1="780" x2="742.5" y2="789" stroke="#84ffd2" stroke-width="1"/><line x1="752.5" y1="189" x2="752.5" y2="780" stroke="#84ffd2" stroke-width="1" stroke-dasharray="4.6 1.58" stroke-dashoffset="4.58"/><line x1="752.5" y1="780" x2="752.5" y2="789" stroke="#84ffd2" stroke-width="1"/><line x1="763.5" y1="189" x2="763.5" y2="780" stroke="#84ffd2" stroke-width="1" stroke-dasharray="4.6 1.58" stroke-dashoffset="4.58"/><line x1="763.5" y1="780" x2="763.5" y2="789" stroke="#84ffd2" stroke-width="1"/><line x1="773.5" y1="189" x2="773.5" y2="780" stroke="#84ffd2" stroke-width="1" stroke-dasharray="4.6 1.58" stroke-dashoffset="4.58"/><line x1="773.5" y1="780" x2="773.5" y2="789" stroke="#84ffd2" stroke-width="1"/><line x1="783.5" y1="189" x2="783.5" y2="780" stroke="#84ffd2" stroke-width="1" stroke-dasharray="4.6 1.58" stroke-dashoffset="4.58"/><line x1="783.5" y1="780" x2="783.5" y2="789" stroke="#84ffd2" stroke-width="1"/><line x1="794.5" y1="189" x2="794.5" y2="780" stroke="#84ffd2" stroke-width="1" stroke-dasharray="4.6 1.58" stroke-dashoffset="4.58"/><line x1="794.5" y1="780" x2="794.5" y2="789" stroke="#84ffd2" stroke-width="1"/><line x1="804.5" y1="189" x2="804.5" y2="780" stroke="#84ffd2" stroke-width="1" stroke-dasharray="4.6 1.58" stroke-dashoffset="4.58"/><line x1="804.5" y1="780" x2="804.5" y2="789" stroke="#84ffd2" stroke-width="1"/><line x1="814.5" y1="189" x2="814.5" y2="780" stroke="#84ffd2" stroke-width="1" stroke-dasharray="4.6 1.58" stroke-dashoffset="4.58"/><line x1="814.5" y1="780" x2="814.5" y2="789" stroke="#84ffd2" stroke-width="1"/><line x1="825.5" y1="189" x2="825.5" y2="780" stroke="#84ffd2" stroke-width="1" stroke-dasharray="4.6 1.58" stroke-dashoffset="4.58"/><line x1="825.5" y1="780" x2="825.5" y2="789" stroke="#84ffd2" stroke-width="1"/><line x1="835.5" y1="189" x2="835.5" y2="780" stroke="#84ffd2" stroke-width="1" stroke-dasharray="4.6 1.58" stroke-dashoffset="4.58"/><line x1="835.5" y1="780" x2="835.5" y2="789" stroke="#84ffd2" stroke-width="1"/><line x1="846.5" y1="189" x2="846.5" y2="780" stroke="#84ffd2" stroke-width="1" stroke-dasharray="4.6 1.58" stroke-dashoffset="4.58"/><line x1="846.5" y1="780" x2="846.5" y2="789" stroke="#84ffd2" stroke-width="1"/><line x1="856.5" y1="189" x2="856.5" y2="780" stroke="#84ffd2" stroke-width="1" stroke-dasharray="4.6 1.58" stroke-dashoffset="4.58"/><line x1="856.5" y1="780" x2="856.5" y2="789" stroke="#84ffd2" stroke-width="1"/><line x1="866.5" y1="189" x2="866.5" y2="780" stroke="#84ffd2" stroke-width="1" stroke-dasharray="4.6 1.58" stroke-dashoffset="4.58"/><line x1="866.5" y1="780" x2="866.5" y2="789" stroke="#84ffd2" stroke-width="1"/><line x1="877.5" y1="189" x2="877.5" y2="780" stroke="#84ffd2" stroke-width="1" stroke-dasharray="4.6 1.58" stroke-dashoffset="4.58"/><line x1="877.5" y1="780" x2="877.5" y2="789" stroke="#84ffd2" stroke-width="1"/><line x1="887.5" y1="189" x2="887.5" y2="780" stroke="#84ffd2" stroke-width="1" stroke-dasharray="4.6 1.58" stroke-dashoffset="4.58"/><line x1="887.5" y1="780" x2="887.5" y2="789" stroke="#84ffd2" stroke-width="1"/><line x1="897.5" y1="189" x2="897.5" y2="780" stroke="#84ffd2" stroke-width="1" stroke-dasharray="4.6 1.58" stroke-dashoffset="4.58"/><line x1="897.5" y1="780" x2="897.5" y2="789" stroke="#84ffd2" stroke-width="1"/><line x1="908.5" y1="189" x2="908.5" y2="780" stroke="#84ffd2" stroke-width="1" stroke-dasharray="4.6 1.58" stroke-dashoffset="4.58"/><line x1="908.5" y1="780" x2="908.5" y2="789" stroke="#84ffd2" stroke-width="1"/><line x1="918.5" y1="189" x2="918.5" y2="780" stroke="#84ffd2" stroke-width="1" stroke-dasharray="4.6 1.58" stroke-dashoffset="4.58"/><line x1="918.5" y1="780" x2="918.5" y2="789" stroke="#84ffd2" stroke-width="1"/><line x1="928.5" y1="189" x2="928.5" y2="780" stroke="#84ffd2" stroke-width="1" stroke-dasharray="4.6 1.58" stroke-dashoffset="4.58"/><line x1="928.5" y1="780" x2="928.5" y2="789" stroke="#84ffd2" stroke-width="1"/><line x1="939.5" y1="189" x2="939.5" y2="780" stroke="#84ffd2" stroke-width="1" stroke-dasharray="4.6 1.58" stroke-dashoffset="4.58"/><line x1="939.5" y1="780" x2="939.5" y2="789" stroke="#84ffd2" stroke-width="1"/><line x1="949.5" y1="189" x2="949.5" y2="780" stroke="#84ffd2" stroke-width="1" stroke-dasharray="4.6 1.58" stroke-dashoffset="4.58"/><line x1="949.5" y1="780" x2="949.5" y2="789" stroke="#84ffd2" stroke-width="1"/><line x1="960.5" y1="189" x2="960.5" y2="780" stroke="#84ffd2" stroke-width="1" stroke-dasharray="4.6 1.58" stroke-dashoffset="4.58"/><line x1="960.5" y1="780" x2="960.5" y2="789" stroke="#84ffd2" stroke-width="1"/><line x1="970.5" y1="189" x2="970.5" y2="780" stroke="#84ffd2" stroke-width="1" stroke-dasharray="4.6 1.58" stroke-dashoffset="4.58"/><line x1="970.5" y1="780" x2="970.5" y2="789" stroke="#84ffd2" stroke-width="1"/><line x1="980.5" y1="189" x2="980.5" y2="780" stroke="#84ffd2" stroke-width="1" stroke-dasharray="4.6 1.58" stroke-dashoffset="4.58"/><line x1="980.5" y1="780" x2="980.5" y2="789" stroke="#84ffd2" stroke-width="1"/><line x1="991.5" y1="189" x2="991.5" y2="780" stroke="#84ffd2" stroke-width="1" stroke-dasharray="4.6 1.58" stroke-dashoffset="4.58"/><line x1="991.5" y1="780" x2="991.5" y2="789" stroke="#84ffd2" stroke-width="1"/><line x1="1001.5" y1="189" x2="1001.5" y2="780" stroke="#84ffd2" stroke-width="1" stroke-dasharray="4.6 1.58" stroke-dashoffset="4.58"/><line x1="1001.5" y1="780" x2="1001.5" y2="789" stroke="#84ffd2" stroke-width="1"/><line x1="1011.5" y1="189" x2="1011.5" y2="780" stroke="#84ffd2" stroke-width="1" stroke-dasharray="4.6 1.58" stroke-dashoffset="4.58"/><line x1="1011.5" y1="780" x2="1011.5" y2="789" stroke="#84ffd2" stroke-width="1"/><line x1="1022.5" y1="189" x2="1022.5" y2="780" stroke="#84ffd2" stroke-width="1" stroke-dasharray="4.6 1.58" stroke-dashoffset="4.58"/><line x1="1022.5" y1="780" x2="1022.5" y2="789" stroke="#84ffd2" stroke-width="1"/><line x1="1032.5" y1="189" x2="1032.5" y2="780" stroke="#84ffd2" stroke-width="1" stroke-dasharray="4.6 1.58" stroke-dashoffset="4.58"/><line x1="1032.5" y1="780" x2="1032.5" y2="789" stroke="#84ffd2" stroke-width="1"/><line x1="1042.5" y1="189" x2="1042.5" y2="780" stroke="#84ffd2" stroke-width="1" stroke-dasharray="4.6 1.58" stroke-dashoffset="4.58"/><line x1="1042.5" y1="780" x2="1042.5" y2="789" stroke="#84ffd2" stroke-width="1"/><line x1="1053.5" y1="189" x2="1053.5" y2="780" stroke="#84ffd2" stroke-width="1" stroke-dasharray="4.6 1.58" stroke-dashoffset="4.58"/><line x1="1053.5" y1="780" x2="1053.5" y2="789" stroke="#84ffd2" stroke-width="1"/><line x1="1063.5" y1="189" x2="1063.5" y2="780" stroke="#84ffd2" stroke-width="1" stroke-dasharray="4.6 1.58" stroke-dashoffset="4.58"/><line x1="1063.5" y1="780" x2="1063.5" y2="789" stroke="#84ffd2" stroke-width="1"/><line x1="1073.5" y1="189" x2="1073.5" y2="780" stroke="#84ffd2" stroke-width="1" stroke-dasharray="4.6 1.58" stroke-dashoffset="4.58"/><line x1="1073.5" y1="780" x2="1073.5" y2="789" stroke="#84ffd2" stroke-width="1"/><line x1="1084.5" y1="189" x2="1084.5" y2="780" stroke="#84ffd2" stroke-width="1" stroke-dasharray="4.6 1.58" stroke-dashoffset="4.58"/><line x1="1084.5" y1="780" x2="1084.5" y2="789" stroke="#84ffd2" stroke-width="1"/><line x1="1094.5" y1="189" x2="1094.5" y2="780" stroke="#84ffd2" stroke-width="1" stroke-dasharray="4.6 1.58" stroke-dashoffset="4.58"/><line x1="1094.5" y1="780" x2="1094.5" y2="789" stroke="#84ffd2" stroke-width="1"/><line x1="1105.5" y1="189" x2="1105.5" y2="780" stroke="#84ffd2" stroke-width="1" stroke-dasharray="4.6 1.58" stroke-dashoffset="4.58"/><line x1="1105.5" y1="780" x2="1105.5" y2="789" stroke="#84ffd2" stroke-width="1"/><line x1="1115.5" y1="189" x2="1115.5" y2="780" stroke="#84ffd2" stroke-width="1" stroke-dasharray="4.6 1.58" stroke-dashoffset="4.58"/><line x1="1115.5" y1="780" x2="1115.5" y2="789" stroke="#84ffd2" stroke-width="1"/><line x1="1125.5" y1="189" x2="1125.5" y2="780" stroke="#84ffd2" stroke-width="1" stroke-dasharray="4.6 1.58" stroke-dashoffset="4.58"/><line x1="1125.5" y1="780" x2="1125.5" y2="789" stroke="#84ffd2" stroke-width="1"/><line x1="1136.5" y1="189" x2="1136.5" y2="780" stroke="#84ffd2" stroke-width="1" stroke-dasharray="4.6 1.58" stroke-dashoffset="4.58"/><line x1="1136.5" y1="780" x2="1136.5" y2="789" stroke="#84ffd2" stroke-width="1"/><line x1="1146.5" y1="189" x2="1146.5" y2="780" stroke="#84ffd2" stroke-width="1" stroke-dasharray="4.6 1.58" stroke-dashoffset="4.58"/><line x1="1146.5" y1="780" x2="1146.5" y2="789" stroke="#84ffd2" stroke-width="1"/><line x1="1156.5" y1="189" x2="1156.5" y2="780" stroke="#84ffd2" stroke-width="1" stroke-dasharray="4.6 1.58" stroke-dashoffset="4.58"/><line x1="1156.5" y1="780" x2="1156.5" y2="789" stroke="#84ffd2" stroke-width="1"/><line x1="1167.5" y1="189" x2="1167.5" y2="780" stroke="#84ffd2" stroke-width="1" stroke-dasharray="4.6 1.58" stroke-dashoffset="4.58"/><line x1="1167.5" y1="780" x2="1167.5" y2="789" stroke="#84ffd2" stroke-width="1"/><line x1="1177.5" y1="189" x2="1177.5" y2="780" stroke="#84ffd2" stroke-width="1" stroke-dasharray="4.6 1.58" stroke-dashoffset="4.58"/><line x1="1177.5" y1="780" x2="1177.5" y2="789" stroke="#84ffd2" stroke-width="1"/><line x1="1187.5" y1="189" x2="1187.5" y2="780" stroke="#84ffd2" stroke-width="1" stroke-dasharray="4.6 1.58" stroke-dashoffset="4.58"/><line x1="1187.5" y1="780" x2="1187.5" y2="789" stroke="#84ffd2" stroke-width="1"/><line x1="1198.5" y1="189" x2="1198.5" y2="780" stroke="#84ffd2" stroke-width="1" stroke-dasharray="4.6 1.58" stroke-dashoffset="4.58"/><line x1="1198.5" y1="780" x2="1198.5" y2="789" stroke="#84ffd2" stroke-width="1"/><line x1="1208.5" y1="189" x2="1208.5" y2="780" stroke="#84ffd2" stroke-width="1" stroke-dasharray="4.6 1.58" stroke-dashoffset="4.58"/><line x1="1208.5" y1="780" x2="1208.5" y2="789" stroke="#84ffd2" stroke-width="1"/><line x1="1218.5" y1="189" x2="1218.5" y2="780" stroke="#84ffd2" stroke-width="1" stroke-dasharray="4.6 1.58" stroke-dashoffset="4.58"/><line x1="1218.5" y1="780" x2="1218.5" y2="789" stroke="#84ffd2" stroke-width="1"/><line x1="1229.5" y1="189" x2="1229.5" y2="780" stroke="#84ffd2" stroke-width="1" stroke-dasharray="4.6 1.58" stroke-dashoffset="4.58"/><line x1="1229.5" y1="780" x2="1229.5" y2="789" stroke="#84ffd2" stroke-width="1"/><line x1="1239.5" y1="189" x2="1239.5" y2="780" stroke="#84ffd2" stroke-width="1" stroke-dasharray="4.6 1.58" stroke-dashoffset="4.58"/><line x1="1239.5" y1="780" x2="1239.5" y2="789" stroke="#84ffd2" stroke-width="1"/><line x1="1250.5" y1="189" x2="1250.5" y2="780" stroke="#84ffd2" stroke-width="1" stroke-dasharray="4.6 1.58" stroke-dashoffset="4.58"/><line x1="1250.5" y1="780" x2="1250.5" y2="789" stroke="#84ffd2" stroke-width="1"/><line x1="1260.5" y1="189" x2="1260.5" y2="780" stroke="#84ffd2" stroke-width="1" stroke-dasharray="4.6 1.58" stroke-dashoffset="4.58"/><line x1="1260.5" y1="780" x2="1260.5" y2="789" stroke="#84ffd2" stroke-width="1"/><line x1="1270.5" y1="189" x2="1270.5" y2="780" stroke="#84ffd2" stroke-width="1" stroke-dasharray="4.6 1.58" stroke-dashoffset="4.58"/><line x1="1270.5" y1="780" x2="1270.5" y2="789" stroke="#84ffd2" stroke-width="1"/><line x1="1219.5" y1="192" x2="1219.5" y2="339" stroke="#84ffd2" stroke-width="1" stroke-dasharray="3 1.5"/><line x1="649" y1="189.5" x2="1271" y2="189.5" stroke="#84ffd2" stroke-width="1"/><line x1="649" y1="188.5" x2="1271" y2="188.5" stroke="#3a2a2a" stroke-width="1"/><line x1="649" y1="789.5" x2="1271" y2="789.5" stroke="#84ffd2" stroke-width="1"/><line x1="658.5" y1="812" x2="658.5" y2="852" stroke="#4d5752" stroke-width="1"/><line x1="668.5" y1="812" x2="668.5" y2="852" stroke="#4d5752" stroke-width="1"/><line x1="678.5" y1="812" x2="678.5" y2="852" stroke="#4d5752" stroke-width="1"/><line x1="687.5" y1="812" x2="687.5" y2="852" stroke="#4d5752" stroke-width="1"/><line x1="697.5" y1="812" x2="697.5" y2="852" stroke="#4d5752" stroke-width="1"/><line x1="707.5" y1="812" x2="707.5" y2="852" stroke="#4d5752" stroke-width="1"/><line x1="717.5" y1="812" x2="717.5" y2="852" stroke="#4d5752" stroke-width="1"/><line x1="726.5" y1="812" x2="726.5" y2="852" stroke="#4d5752" stroke-width="1"/><line x1="736.5" y1="812" x2="736.5" y2="852" stroke="#4d5752" stroke-width="1"/><line x1="746.5" y1="812" x2="746.5" y2="852" stroke="#4d5752" stroke-width="1"/><line x1="755.5" y1="812" x2="755.5" y2="852" stroke="#4d5752" stroke-width="1"/><line x1="765.5" y1="812" x2="765.5" y2="852" stroke="#4d5752" stroke-width="1"/><line x1="775.5" y1="812" x2="775.5" y2="852" stroke="#4d5752" stroke-width="1"/><line x1="785.5" y1="812" x2="785.5" y2="852" stroke="#4d5752" stroke-width="1"/><line x1="794.5" y1="812" x2="794.5" y2="852" stroke="#4d5752" stroke-width="1"/><line x1="804.5" y1="812" x2="804.5" y2="852" stroke="#4d5752" stroke-width="1"/><line x1="814.5" y1="812" x2="814.5" y2="852" stroke="#4d5752" stroke-width="1"/><line x1="823.5" y1="812" x2="823.5" y2="852" stroke="#4d5752" stroke-width="1"/><line x1="833.5" y1="812" x2="833.5" y2="852" stroke="#4d5752" stroke-width="1"/><line x1="843.5" y1="812" x2="843.5" y2="852" stroke="#4d5752" stroke-width="1"/><line x1="853.5" y1="812" x2="853.5" y2="852" stroke="#4d5752" stroke-width="1"/><line x1="862.5" y1="812" x2="862.5" y2="852" stroke="#4d5752" stroke-width="1"/><line x1="872.5" y1="812" x2="872.5" y2="852" stroke="#4d5752" stroke-width="1"/><line x1="882.5" y1="812" x2="882.5" y2="852" stroke="#4d5752" stroke-width="1"/><line x1="891.5" y1="812" x2="891.5" y2="852" stroke="#4d5752" stroke-width="1"/><line x1="901.5" y1="812" x2="901.5" y2="852" stroke="#4d5752" stroke-width="1"/><line x1="911.5" y1="812" x2="911.5" y2="852" stroke="#4d5752" stroke-width="1"/><line x1="921.5" y1="812" x2="921.5" y2="852" stroke="#4d5752" stroke-width="1"/><line x1="930.5" y1="812" x2="930.5" y2="852" stroke="#4d5752" stroke-width="1"/><line x1="940.5" y1="812" x2="940.5" y2="852" stroke="#4d5752" stroke-width="1"/><line x1="950.5" y1="812" x2="950.5" y2="852" stroke="#4d5752" stroke-width="1"/><line x1="959.5" y1="812" x2="959.5" y2="852" stroke="#4d5752" stroke-width="1"/><line x1="969.5" y1="812" x2="969.5" y2="852" stroke="#4d5752" stroke-width="1"/><line x1="979.5" y1="812" x2="979.5" y2="852" stroke="#4d5752" stroke-width="1"/><line x1="989.5" y1="812" x2="989.5" y2="852" stroke="#4d5752" stroke-width="1"/><line x1="998.5" y1="812" x2="998.5" y2="852" stroke="#4d5752" stroke-width="1"/><line x1="1008.5" y1="812" x2="1008.5" y2="852" stroke="#4d5752" stroke-width="1"/><line x1="1018.5" y1="812" x2="1018.5" y2="852" stroke="#4d5752" stroke-width="1"/><line x1="1027.5" y1="812" x2="1027.5" y2="852" stroke="#4d5752" stroke-width="1"/><line x1="1037.5" y1="812" x2="1037.5" y2="852" stroke="#4d5752" stroke-width="1"/><line x1="1047.5" y1="812" x2="1047.5" y2="852" stroke="#4d5752" stroke-width="1"/><line x1="1057.5" y1="812" x2="1057.5" y2="852" stroke="#4d5752" stroke-width="1"/><line x1="1066.5" y1="812" x2="1066.5" y2="852" stroke="#4d5752" stroke-width="1"/><line x1="1076.5" y1="812" x2="1076.5" y2="852" stroke="#4d5752" stroke-width="1"/><line x1="1086.5" y1="812" x2="1086.5" y2="852" stroke="#4d5752" stroke-width="1"/><line x1="1095.5" y1="812" x2="1095.5" y2="852" stroke="#4d5752" stroke-width="1"/><line x1="1105.5" y1="812" x2="1105.5" y2="852" stroke="#4d5752" stroke-width="1"/><line x1="1115.5" y1="812" x2="1115.5" y2="852" stroke="#4d5752" stroke-width="1"/><line x1="1125.5" y1="812" x2="1125.5" y2="852" stroke="#4d5752" stroke-width="1"/><line x1="1134.5" y1="812" x2="1134.5" y2="852" stroke="#4d5752" stroke-width="1"/><line x1="1144.5" y1="812" x2="1144.5" y2="852" stroke="#4d5752" stroke-width="1"/><line x1="1154.5" y1="812" x2="1154.5" y2="852" stroke="#4d5752" stroke-width="1"/><line x1="1163.5" y1="812" x2="1163.5" y2="852" stroke="#4d5752" stroke-width="1"/><line x1="1173.5" y1="812" x2="1173.5" y2="852" stroke="#4d5752" stroke-width="1"/><line x1="1183.5" y1="812" x2="1183.5" y2="852" stroke="#4d5752" stroke-width="1"/><line x1="1193.5" y1="812" x2="1193.5" y2="852" stroke="#4d5752" stroke-width="1"/><line x1="1202.5" y1="812" x2="1202.5" y2="852" stroke="#4d5752" stroke-width="1"/><line x1="1212.5" y1="812" x2="1212.5" y2="852" stroke="#4d5752" stroke-width="1"/><line x1="1222.5" y1="812" x2="1222.5" y2="852" stroke="#4d5752" stroke-width="1"/><line x1="1231.5" y1="812" x2="1231.5" y2="852" stroke="#4d5752" stroke-width="1"/><line x1="1241.5" y1="812" x2="1241.5" y2="852" stroke="#4d5752" stroke-width="1"/><line x1="1251.5" y1="812" x2="1251.5" y2="852" stroke="#4d5752" stroke-width="1"/><line x1="1261.5" y1="812" x2="1261.5" y2="852" stroke="#4d5752" stroke-width="1"/><rect x="649.5" y="811.5" width="621" height="41" fill="none" stroke="#84ffd2" stroke-width="1" stroke-dasharray="4 2"/></svg>
<svg class="a" style="left:786px;top:382px" width="14" height="22" viewBox="0 0 14 22"><path d="M1 1 L1 17 L5 13 L8 20 L10.5 19 L7.5 12 L13 12 Z" fill="#fff" stroke="#000" stroke-width="1"/></svg>
<div class="a" style="left:1459px;top:142px;width:260px;height:36px;background:#4a5551;"></div>
<div class="t" style="left:1465px;top:153.7px;font-size:12px;color:#e6e6e6;">Lumiverse 1</div>
<div class="a" style="left:1459px;top:179px;width:86px;height:23px;background:#1f1f1f;"></div>
<div class="a" style="left:1546px;top:179px;width:173px;height:23px;background:#1f1f1f;"></div>
<div class="t" style="left:1467px;top:184.7px;font-size:12px;color:#e6e6e6;">Auto Span</div>
<div class="a" style="left:1550px;top:184px;width:13px;height:13px;border:2px solid #6fd9b3;border-radius:3px;box-sizing:border-box;background:#1f1f1f;"><div style="position:absolute;left:1px;top:1px;width:7px;height:7px;background:#84ffd2;border-radius:1px;"></div></div>
<div class="a" style="left:1459px;top:203px;width:86px;height:23px;background:#1f1f1f;"></div>
<div class="a" style="left:1546px;top:203px;width:173px;height:23px;background:#1f1f1f;"></div>
<div class="t" style="left:1467px;top:208.7px;font-size:12px;color:#e6e6e6;">Align Output</div>
<div class="a" style="left:1550px;top:208px;width:13px;height:13px;border:2px solid #6fd9b3;border-radius:3px;box-sizing:border-box;background:#1f1f1f;"><div style="position:absolute;left:1px;top:1px;width:7px;height:7px;background:#84ffd2;border-radius:1px;"></div></div>
<div class="a" style="left:1459px;top:227px;width:86px;height:47px;background:#1f1f1f;"></div>
<div class="a" style="left:1546px;top:227px;width:173px;height:47px;background:#1f1f1f;"></div>
<div class="t" style="left:1467px;top:232.7px;font-size:12px;color:#e6e6e6;">TargetIP</div>
<div class="t" style="left:1552px;top:232.7px;font-size:12px;color:#e6e6e6;">IP Address</div>
<svg class="a" style="left:1704px;top:236px" width="9" height="5"><path d="M0 0 L9 0 L4.5 5 Z" fill="#fff"/></svg>
<div class="a" style="left:1547px;top:253px;width:171px;height:20px;border:1px solid #555;box-sizing:border-box;background:#1f1f1f;"></div>
<div class="t" style="left:1552px;top:257.7px;font-size:12px;color:#e6e6e6;">192.168.1.106</div>
<div class="a" style="left:1459px;top:275px;width:86px;height:23px;background:#1f1f1f;"></div>
<div class="a" style="left:1546px;top:275px;width:173px;height:23px;background:#1f1f1f;"></div>
<div class="t" style="left:1467px;top:280.7px;font-size:12px;color:#e6e6e6;">Subnet</div>
<div class="t" style="left:1551px;top:280.7px;font-size:12px;color:#e6e6e6;">0</div>
<div class="t" style="left:1601px;top:279.7px;font-size:12px;color:#e6e6e6;">&#x2212;</div>
<div class="t" style="left:1622px;top:279.7px;font-size:13px;color:#e6e6e6;font-weight:bold;">+</div>
<div class="a" style="left:1459px;top:299px;width:86px;height:23px;background:#1f1f1f;"></div>
<div class="a" style="left:1546px;top:299px;width:173px;height:23px;background:#1f1f1f;"></div>
<div class="t" style="left:1467px;top:304.7px;font-size:12px;color:#e6e6e6;">Universe</div>
<div class="t" style="left:1551px;top:304.7px;font-size:12px;color:#e6e6e6;">0</div>
<div class="t" style="left:1601px;top:303.7px;font-size:12px;color:#e6e6e6;">&#x2212;</div>
<div class="t" style="left:1622px;top:303.7px;font-size:13px;color:#e6e6e6;font-weight:bold;">+</div>
<div class="a" style="left:1459px;top:323px;width:86px;height:23px;background:#1f1f1f;"></div>
<div class="a" style="left:1546px;top:323px;width:173px;height:23px;background:#1f1f1f;"></div>
<div class="t" style="left:1467px;top:328.7px;font-size:12px;color:#e6e6e6;">Framerate</div>
<div class="t" style="left:1551px;top:328.7px;font-size:12px;color:#e6e6e6;">30</div>
<div class="t" style="left:1601px;top:327.7px;font-size:12px;color:#e6e6e6;">&#x2212;</div>
<div class="t" style="left:1622px;top:327.7px;font-size:13px;color:#e6e6e6;font-weight:bold;">+</div>
<div class="a" style="left:1647px;top:326px;width:65px;height:17px;background:#0a0a0a;"></div>
<div class="a" style="left:1647px;top:326px;width:45px;height:17px;background:#2a2a2a;"></div>
<div class="a" style="left:1692px;top:326px;width:4px;height:17px;background:#4a8c78;"></div>
<div class="a" style="left:1459px;top:347px;width:86px;height:23px;background:#1f1f1f;"></div>
<div class="a" style="left:1546px;top:347px;width:173px;height:23px;background:#1f1f1f;"></div>
<div class="t" style="left:1467px;top:352.7px;font-size:12px;color:#e6e6e6;">Delay</div>
<div class="t" style="left:1551px;top:352.7px;font-size:12px;color:#e6e6e6;">40 ms</div>
<div class="t" style="left:1601px;top:351.7px;font-size:12px;color:#e6e6e6;">&#x2212;</div>
<div class="t" style="left:1622px;top:351.7px;font-size:13px;color:#e6e6e6;font-weight:bold;">+</div>
<div class="a" style="left:1647px;top:350px;width:65px;height:17px;background:#0a0a0a;"></div>
<div class="a" style="left:1647px;top:350px;width:16px;height:17px;background:#2a2a2a;"></div>
<div class="a" style="left:1663px;top:350px;width:4px;height:17px;background:#4a8c78;"></div>
<div class="a" style="left:1459px;top:371px;width:86px;height:23px;background:#1f1f1f;"></div>
<div class="a" style="left:1546px;top:371px;width:173px;height:23px;background:#1f1f1f;"></div>
<div class="t" style="left:1467px;top:376.7px;font-size:12px;color:#e6e6e6;">Opacity</div>
<div class="t" style="left:1551px;top:376.7px;font-size:12px;color:#e6e6e6;">100 %</div>
<div class="t" style="left:1601px;top:375.7px;font-size:12px;color:#e6e6e6;">&#x2212;</div>
<div class="t" style="left:1622px;top:375.7px;font-size:13px;color:#e6e6e6;font-weight:bold;">+</div>
<div class="a" style="left:1647px;top:374px;width:65px;height:17px;background:#0a0a0a;"></div>
<div class="a" style="left:1647px;top:374px;width:61px;height:17px;background:#2a2a2a;"></div>
<div class="a" style="left:1708px;top:374px;width:4px;height:17px;background:#4a8c78;"></div>
<div class="a" style="left:1459px;top:395px;width:86px;height:23px;background:#1f1f1f;"></div>
<div class="a" style="left:1546px;top:395px;width:173px;height:23px;background:#1f1f1f;"></div>
<div class="t" style="left:1467px;top:400.7px;font-size:12px;color:#e6e6e6;">Brightness</div>
<div class="t" style="left:1551px;top:400.7px;font-size:12px;color:#e6e6e6;">0</div>
<div class="t" style="left:1601px;top:399.7px;font-size:12px;color:#e6e6e6;">&#x2212;</div>
<div class="t" style="left:1622px;top:399.7px;font-size:13px;color:#e6e6e6;font-weight:bold;">+</div>
<div class="a" style="left:1647px;top:398px;width:65px;height:17px;background:#0a0a0a;"></div>
<div class="a" style="left:1677px;top:398px;width:4px;height:17px;background:#4a8c78;"></div>
<div class="a" style="left:1459px;top:419px;width:86px;height:23px;background:#1f1f1f;"></div>
<div class="a" style="left:1546px;top:419px;width:173px;height:23px;background:#1f1f1f;"></div>
<div class="t" style="left:1467px;top:424.7px;font-size:12px;color:#e6e6e6;">Contrast</div>
<div class="t" style="left:1551px;top:424.7px;font-size:12px;color:#e6e6e6;">0</div>
<div class="t" style="left:1601px;top:423.7px;font-size:12px;color:#e6e6e6;">&#x2212;</div>
<div class="t" style="left:1622px;top:423.7px;font-size:13px;color:#e6e6e6;font-weight:bold;">+</div>
<div class="a" style="left:1647px;top:422px;width:65px;height:17px;background:#0a0a0a;"></div>
<div class="a" style="left:1677px;top:422px;width:4px;height:17px;background:#4a8c78;"></div>
<div class="a" style="left:1459px;top:443px;width:86px;height:23px;background:#1f1f1f;"></div>
<div class="a" style="left:1546px;top:443px;width:173px;height:23px;background:#1f1f1f;"></div>
<div class="t" style="left:1467px;top:448.7px;font-size:12px;color:#e6e6e6;">Red</div>
<div class="t" style="left:1551px;top:448.7px;font-size:12px;color:#e6e6e6;">0</div>
<div class="t" style="left:1601px;top:447.7px;font-size:12px;color:#e6e6e6;">&#x2212;</div>
<div class="t" style="left:1622px;top:447.7px;font-size:13px;color:#e6e6e6;font-weight:bold;">+</div>
<div class="a" style="left:1647px;top:446px;width:65px;height:17px;background:#0a0a0a;"></div>
<div class="a" style="left:1677px;top:446px;width:4px;height:17px;background:#ff0000;"></div>
<div class="a" style="left:1459px;top:467px;width:86px;height:23px;background:#1f1f1f;"></div>
<div class="a" style="left:1546px;top:467px;width:173px;height:23px;background:#1f1f1f;"></div>
<div class="t" style="left:1467px;top:472.7px;font-size:12px;color:#e6e6e6;">Green</div>
<div class="t" style="left:1551px;top:472.7px;font-size:12px;color:#e6e6e6;">0</div>
<div class="t" style="left:1601px;top:471.7px;font-size:12px;color:#e6e6e6;">&#x2212;</div>
<div class="t" style="left:1622px;top:471.7px;font-size:13px;color:#e6e6e6;font-weight:bold;">+</div>
<div class="a" style="left:1647px;top:470px;width:65px;height:17px;background:#0a0a0a;"></div>
<div class="a" style="left:1677px;top:470px;width:4px;height:17px;background:#00e000;"></div>
<div class="a" style="left:1459px;top:491px;width:86px;height:23px;background:#1f1f1f;"></div>
<div class="a" style="left:1546px;top:491px;width:173px;height:23px;background:#1f1f1f;"></div>
<div class="t" style="left:1467px;top:496.7px;font-size:12px;color:#e6e6e6;">Blue</div>
<div class="t" style="left:1551px;top:496.7px;font-size:12px;color:#e6e6e6;">0</div>
<div class="t" style="left:1601px;top:495.7px;font-size:12px;color:#e6e6e6;">&#x2212;</div>
<div class="t" style="left:1622px;top:495.7px;font-size:13px;color:#e6e6e6;font-weight:bold;">+</div>
<div class="a" style="left:1647px;top:494px;width:65px;height:17px;background:#0a0a0a;"></div>
<div class="a" style="left:1677px;top:494px;width:4px;height:17px;background:#0000f0;"></div>
<div class="a" style="left:1459px;top:515px;width:260px;height:23px;background:#4a5551;"></div>
<div class="t" style="left:1465px;top:520.2px;font-size:12.5px;color:#e6e6e6;">Input Guide</div>
<div class="a" style="left:1459px;top:539px;width:260px;height:23px;background:#1f1f1f;"></div>
<div class="a" style="left:1465px;top:542px;width:48px;height:15px;background:#3a3a3a;border-radius:3px;"></div>
<div class="a c" style="left:1465px;top:542px;width:48px;height:15px;line-height:15px;font-size:9px;color:#dddddd;">Load...</div>
<div class="t" style="left:1567px;top:544.7px;font-size:10px;color:#5a5a5a;">Drop image file here.</div>
<div class="a" style="left:1281px;top:870px;width:63px;height:19px;background:#3a3a3a;border-radius:3px;"></div>
<div class="a c" style="left:1281px;top:870px;width:63px;height:19px;line-height:19px;font-size:11.5px;color:#e6e6e6;">Cancel</div>
<div class="a" style="left:1350px;top:870px;width:104px;height:19px;background:#3a3a3a;border-radius:3px;"></div>
<div class="a c" style="left:1350px;top:870px;width:104px;height:19px;line-height:19px;font-size:11.5px;color:#e6e6e6;">Save &amp; Close</div>
</body></html>
